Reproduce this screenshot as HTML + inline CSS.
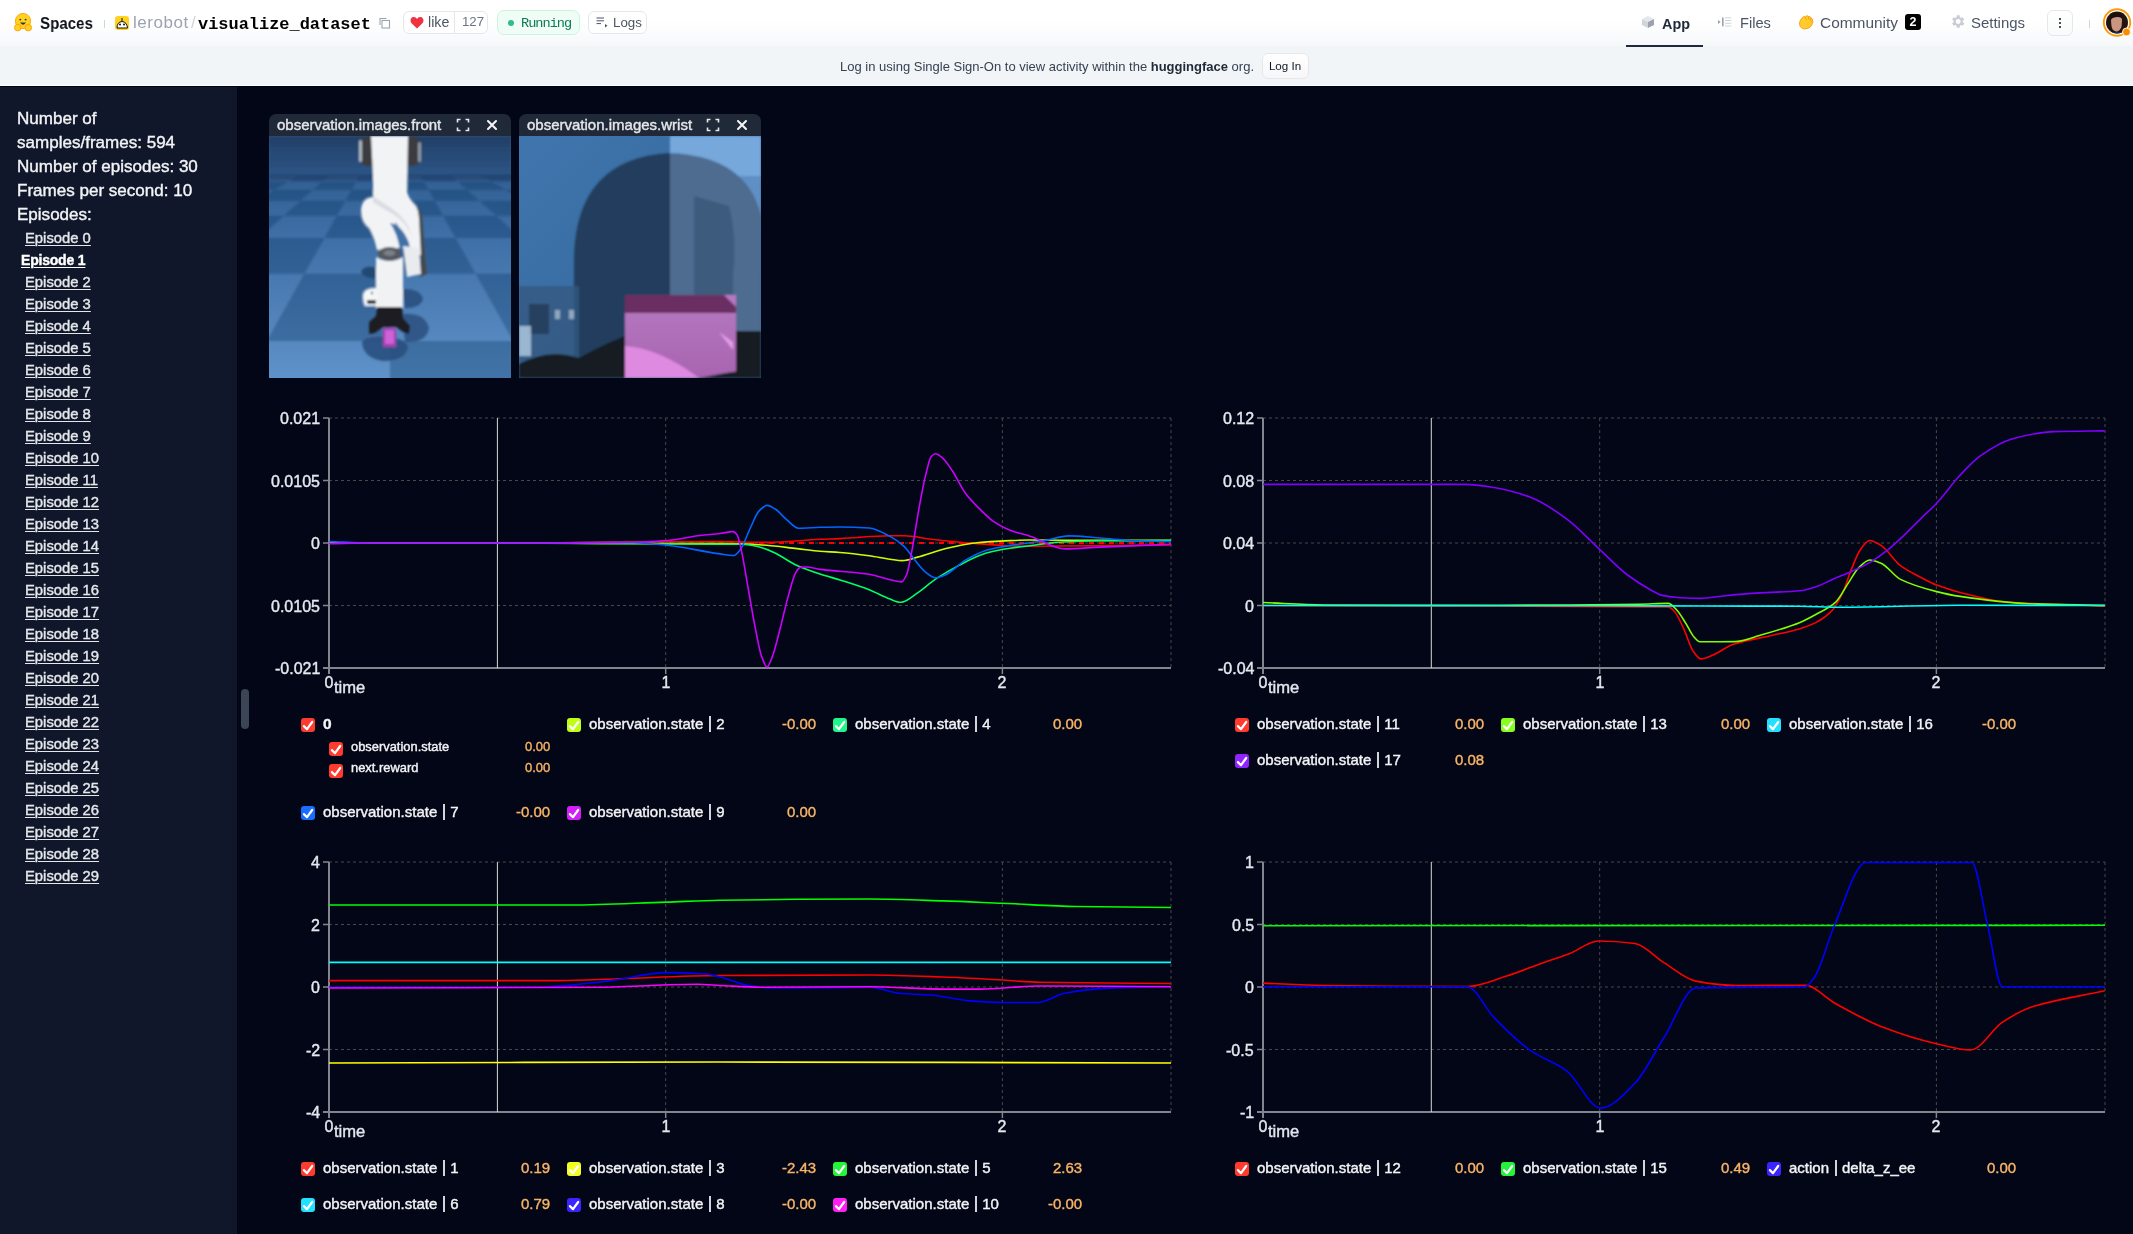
<!DOCTYPE html>
<html><head><meta charset="utf-8"><title>visualize_dataset</title>
<style>
html,body{margin:0;padding:0;}
.dk div{-webkit-text-stroke:0.4px currentColor;}
div{will-change:transform;}
body{width:2133px;height:1234px;overflow:hidden;position:relative;background:#020617;font-family:"Liberation Sans", sans-serif;}
</style></head><body>
<div style="position:absolute;left:0px;top:0px;width:2133px;height:46px;background:linear-gradient(to bottom,#ffffff 0%,#ffffff 45%,#f6f8fa 100%);"></div>
<div style="position:absolute;left:0px;top:46px;width:2133px;height:39px;background:#f2f5f8;"></div>
<div style="position:absolute;left:0px;top:85px;width:2133px;height:1px;background:#ffffff;"></div>
<svg style="position:absolute;left:13px;top:12px" width="21" height="21" viewBox="0 0 21 21">
<circle cx="10" cy="9" r="7.6" fill="#FFD21E" stroke="#FF9D0B" stroke-width="0.9"/>
<circle cx="7.3" cy="7.6" r="0.95" fill="#32343D"/><circle cx="12.6" cy="7.6" r="0.95" fill="#32343D"/>
<path d="M7 10.4 Q10 14.6 13 10.4 Z" fill="#32343D"/><path d="M8.4 12.3 Q10 13.6 11.6 12.3 Q10 11.6 8.4 12.3Z" fill="#FF323D"/>
<ellipse cx="4.8" cy="15.6" rx="3.3" ry="3.3" fill="#FFD21E" stroke="#FF9D0B" stroke-width="0.9"/>
<ellipse cx="15.3" cy="15.6" rx="3.3" ry="3.3" fill="#FFD21E" stroke="#FF9D0B" stroke-width="0.9"/>
</svg>
<div style="position:absolute;top:12.58px;font-size:16.8px;line-height:21.0px;color:#0b0f19;font-weight:700;font-family:'Liberation Sans', sans-serif;white-space:nowrap;left:39.50px;transform:scaleX(0.9);transform-origin:0 0;">Spaces</div>
<div style="position:absolute;left:104px;top:20px;width:1px;height:8px;background:#d1d5db;"></div>
<svg style="position:absolute;left:115px;top:16px" width="14" height="14" viewBox="0 0 14 14">
<rect x="0" y="0" width="14" height="14" rx="3" fill="#FFD21E"/>
<path d="M2 12 Q2 6 7 5.5 Q12 6 12.5 12 Z" fill="#fff" stroke="#111" stroke-width="1"/>
<circle cx="5" cy="8.5" r="1" fill="#111"/><circle cx="9" cy="8.5" r="1" fill="#111"/>
<rect x="6.5" y="2" width="1" height="3" fill="#111"/>
</svg>
<div style="position:absolute;top:12.48px;font-size:17px;line-height:21.25px;color:#9ca3af;font-weight:400;font-family:'Liberation Sans', sans-serif;white-space:nowrap;letter-spacing:0.55px;left:133.00px;">lerobot</div>
<div style="position:absolute;top:12.48px;font-size:17px;line-height:21.25px;color:#d1d5db;font-weight:400;font-family:'Liberation Sans', sans-serif;white-space:nowrap;left:190.50px;">/</div>
<div style="position:absolute;top:13.69px;font-size:16.95px;line-height:21.19px;color:#000000;font-weight:700;font-family:'Liberation Mono', monospace;white-space:nowrap;left:197.60px;">visualize_dataset</div>
<svg style="position:absolute;left:379px;top:17px" width="12" height="12" viewBox="0 0 12 12" fill="none" stroke="#9ca3af" stroke-width="1.1">
<path d="M1 8 V1.5 H7.5"/><rect x="3" y="3.5" width="7.5" height="7.5" fill="#fff"/></svg>
<div style="position:absolute;left:403px;top:11px;width:85px;height:23px;background:#fff;box-sizing:border-box;border:1px solid #e5e7eb;border-radius:6px;"></div>
<div style="position:absolute;left:454px;top:12px;width:1px;height:21px;background:#e5e7eb;"></div>
<svg style="position:absolute;left:410px;top:16px" width="14" height="13" viewBox="0 0 14 13">
<path d="M7 12.5 L1.6 7.3 C-0.3 5.4 0.3 1.2 3.6 1 C5.2 0.9 6.3 1.9 7 2.9 C7.7 1.9 8.8 0.9 10.4 1 C13.7 1.2 14.3 5.4 12.4 7.3 Z" fill="#ef3340"/></svg>
<div style="position:absolute;top:13.50px;font-size:14.2px;line-height:17.75px;color:#4b5563;font-weight:400;font-family:'Liberation Sans', sans-serif;white-space:nowrap;left:427.70px;">like</div>
<div style="position:absolute;top:14.48px;font-size:13.2px;line-height:16.5px;color:#6b7280;font-weight:400;font-family:'Liberation Sans', sans-serif;white-space:nowrap;left:461.50px;">127</div>
<div style="position:absolute;left:497px;top:10px;width:83px;height:25px;background:#effdf6;box-sizing:border-box;border:1px solid #c9f5de;border-radius:7px;"></div>
<div style="position:absolute;left:507.5px;top:19.5px;width:6px;height:6px;border-radius:50%;background:#2fbf86"></div>
<div style="position:absolute;top:14.88px;font-size:13.6px;line-height:17.0px;color:#0b7a55;font-weight:400;font-family:'Liberation Mono', monospace;white-space:nowrap;letter-spacing:-1.0px;left:520.50px;">Running</div>
<div style="position:absolute;left:588px;top:11px;width:59px;height:23px;background:#fff;box-sizing:border-box;border:1px solid #e5e7eb;border-radius:6px;"></div>
<svg style="position:absolute;left:596px;top:17px" width="12" height="11" viewBox="0 0 12 11" fill="none" stroke="#4b5563" stroke-width="1">
<path d="M0.5 1 H8 M0.5 3.8 H8 M0.5 6.6 H5"/><path d="M9 7 L11.5 8.8 L9 10.5 Z" fill="#4b5563" stroke="none"/></svg>
<div style="position:absolute;top:14.68px;font-size:13.3px;line-height:16.62px;color:#4b5563;font-weight:400;font-family:'Liberation Sans', sans-serif;white-space:nowrap;left:613.00px;">Logs</div>
<svg style="position:absolute;left:1641px;top:15px" width="14" height="14" viewBox="0 0 14 14">
<path d="M7 1 L13 4 L7 7 L1 4 Z" fill="#e5e7eb"/><path d="M1 4 L7 7 L7 13 L1 10 Z" fill="#d1d5db"/><path d="M13 4 L7 7 L7 13 L13 10 Z" fill="#9ca3af"/></svg>
<div style="position:absolute;top:14.81px;font-size:14.4px;line-height:18.0px;color:#1f2937;font-weight:700;font-family:'Liberation Sans', sans-serif;white-space:nowrap;left:1662.00px;">App</div>
<div style="position:absolute;left:1626px;top:45px;width:77px;height:2px;background:#1f2937;"></div>
<svg style="position:absolute;left:1717px;top:16px" width="16" height="12" viewBox="0 0 16 12">
<path d="M1 3.9 L3.7 6 L1 8.1 Z" fill="#9ca3af"/><rect x="5" y="1.5" width="1.6" height="8.8" fill="#9ca3af"/>
<rect x="8" y="1.3" width="6.3" height="1" fill="#d1d5db"/><rect x="8" y="4" width="6.3" height="1" fill="#d1d5db"/><rect x="8" y="6.8" width="6.3" height="1" fill="#d1d5db"/><rect x="8" y="9.5" width="6.3" height="1" fill="#d1d5db"/></svg>
<div style="position:absolute;top:13.82px;font-size:14.6px;line-height:18.25px;color:#4b5563;font-weight:400;font-family:'Liberation Sans', sans-serif;white-space:nowrap;left:1739.50px;">Files</div>
<svg style="position:absolute;left:1798px;top:14px" width="16" height="16" viewBox="0 0 16 16">
<path d="M1.6 10.5 C1.2 7.5 3 4.8 4.8 3.3 C5.6 2.2 6.8 2.4 7.2 3.2 C8 1.6 9.6 1.4 10.4 2.6 C11.4 2.2 12.8 2.8 12.9 4 C14.2 4.2 14.9 5.6 14.3 6.8 C15.2 7.6 15 9 14.2 9.8 C13.8 12.4 11 14.6 7.4 14.8 C4 15 2 13 1.6 10.5 Z" fill="#FFCC2E" stroke="#FF9D0B" stroke-width="1"/>
<path d="M7.2 3.2 L8.6 6.4 M10.4 2.6 L11 5.6 M12.9 4 L12.6 6.8 M14.3 6.8 L12.8 8.6" stroke="#F29A0D" stroke-width="0.8" fill="none"/></svg>
<div style="position:absolute;top:12.99px;font-size:15.45px;line-height:19.31px;color:#4b5563;font-weight:400;font-family:'Liberation Sans', sans-serif;white-space:nowrap;left:1820.00px;">Community</div>
<div style="position:absolute;left:1905px;top:14px;width:16px;height:16px;background:#000;border-radius:3px;"></div>
<div style="position:absolute;top:14.86px;font-size:12.5px;line-height:15.62px;color:#fff;font-weight:700;font-family:'Liberation Sans', sans-serif;white-space:nowrap;left:1613.00px;width:600px;text-align:center;">2</div>
<svg style="position:absolute;left:1948.5px;top:13px" width="17" height="17" viewBox="0 0 24 24">
<path fill="#c9cdd3" d="M19.4 13a7.5 7.5 0 0 0 0-2l2.1-1.6-2-3.5-2.5 1a7.6 7.6 0 0 0-1.7-1L15 3.2h-4l-.4 2.7a7.6 7.6 0 0 0-1.7 1l-2.5-1-2 3.5L6.5 11a7.5 7.5 0 0 0 0 2l-2.1 1.6 2 3.5 2.5-1a7.6 7.6 0 0 0 1.7 1l.4 2.7h4l.4-2.7a7.6 7.6 0 0 0 1.7-1l2.5 1 2-3.5zM13 15.5a3.5 3.5 0 1 1 0-7 3.5 3.5 0 0 1 0 7z"/></svg>
<div style="position:absolute;top:14.37px;font-size:14.95px;line-height:18.69px;color:#4b5563;font-weight:400;font-family:'Liberation Sans', sans-serif;white-space:nowrap;left:1970.50px;">Settings</div>
<div style="position:absolute;left:2047px;top:10px;width:26px;height:26px;background:#fff;box-sizing:border-box;border:1px solid #e5e7eb;border-radius:6px;background:linear-gradient(#fff,#f9fafb);"></div>
<div style="position:absolute;left:2059px;top:18px;width:2px;height:2px;background:#111;border-radius:1px"></div>
<div style="position:absolute;left:2059px;top:22px;width:2px;height:2px;background:#111;border-radius:1px"></div>
<div style="position:absolute;left:2059px;top:26px;width:2px;height:2px;background:#111;border-radius:1px"></div>
<div style="position:absolute;left:2089px;top:20px;width:1px;height:8px;background:#d1d5db;"></div>
<svg style="position:absolute;left:2102px;top:7px" width="31" height="31" viewBox="0 0 31 31">
<circle cx="15" cy="15.5" r="13.2" fill="#fff" stroke="#fb9b0b" stroke-width="1.9"/>
<clipPath id="avc"><circle cx="15" cy="15.5" r="11"/></clipPath>
<g clip-path="url(#avc)"><rect x="0" y="0" width="31" height="31" fill="#24140f"/>
<path d="M9 14 Q9 7 15 7.5 Q20.5 8 20 14 L19.5 20 Q17 25 14 24.5 Q10 23.5 9.5 19Z" fill="#c99682"/>
<path d="M8 13 Q8 5 15 5.5 Q22 6 21 13 Q19 9.5 15 10 Q11 10 8 13Z" fill="#1a0f0b"/>
<path d="M4 31 Q8 24 15 25 Q22 24 26 31Z" fill="#1d3050"/></g>
<circle cx="24.5" cy="25" r="4" fill="#fb8c00" stroke="#fff" stroke-width="0.9"/></svg>
<div style="position:absolute;left:840px;top:58.50px;font-size:13px;line-height:16px;color:#374151;white-space:nowrap;font-family:'Liberation Sans', sans-serif">Log in using Single Sign-On to view activity within the <b style="color:#1f2937">huggingface</b> org.</div>
<div style="position:absolute;left:1262px;top:53px;width:47px;height:26px;background:#fff;box-sizing:border-box;border:1px solid #e5e7eb;border-radius:6px;background:linear-gradient(#fff,#f7f7f9);"></div>
<div style="position:absolute;top:59.13px;font-size:11.6px;line-height:14.5px;color:#111827;font-weight:400;font-family:'Liberation Sans', sans-serif;white-space:nowrap;left:985.30px;width:600px;text-align:center;">Log In</div>
<div class="dk">
<div style="position:absolute;left:0px;top:86px;width:237px;height:1148px;background:#10172a;"></div>
<div style="position:absolute;left:0px;top:86px;width:2133px;height:1px;background:#00030f;"></div>
<div style="position:absolute;top:107.84px;font-size:17.05px;line-height:21.31px;color:#f3f4f6;font-weight:400;font-family:'Liberation Sans', sans-serif;white-space:nowrap;left:17.00px;">Number of</div>
<div style="position:absolute;top:131.84px;font-size:17.05px;line-height:21.31px;color:#f3f4f6;font-weight:400;font-family:'Liberation Sans', sans-serif;white-space:nowrap;left:17.00px;">samples/frames: 594</div>
<div style="position:absolute;top:155.84px;font-size:17.05px;line-height:21.31px;color:#f3f4f6;font-weight:400;font-family:'Liberation Sans', sans-serif;white-space:nowrap;left:17.00px;">Number of episodes: 30</div>
<div style="position:absolute;top:179.84px;font-size:17.05px;line-height:21.31px;color:#f3f4f6;font-weight:400;font-family:'Liberation Sans', sans-serif;white-space:nowrap;left:17.00px;">Frames per second: 10</div>
<div style="position:absolute;top:203.84px;font-size:17.05px;line-height:21.31px;color:#f3f4f6;font-weight:400;font-family:'Liberation Sans', sans-serif;white-space:nowrap;left:17.00px;">Episodes:</div>
<div style="position:absolute;top:229.12px;font-size:14.8px;line-height:18.5px;color:#e5e7eb;font-weight:400;font-family:'Liberation Sans', sans-serif;white-space:nowrap;left:25.00px;text-decoration:underline;text-underline-offset:2px;text-decoration-thickness:1px;">Episode 0</div>
<div style="position:absolute;top:251.90px;font-size:14.0px;line-height:17.5px;color:#ffffff;font-weight:700;font-family:'Liberation Sans', sans-serif;white-space:nowrap;letter-spacing:-0.2px;left:21.00px;text-decoration:underline;text-underline-offset:2px;text-decoration-thickness:1px;">Episode 1</div>
<div style="position:absolute;top:273.12px;font-size:14.8px;line-height:18.5px;color:#e5e7eb;font-weight:400;font-family:'Liberation Sans', sans-serif;white-space:nowrap;left:25.00px;text-decoration:underline;text-underline-offset:2px;text-decoration-thickness:1px;">Episode 2</div>
<div style="position:absolute;top:295.12px;font-size:14.8px;line-height:18.5px;color:#e5e7eb;font-weight:400;font-family:'Liberation Sans', sans-serif;white-space:nowrap;left:25.00px;text-decoration:underline;text-underline-offset:2px;text-decoration-thickness:1px;">Episode 3</div>
<div style="position:absolute;top:317.12px;font-size:14.8px;line-height:18.5px;color:#e5e7eb;font-weight:400;font-family:'Liberation Sans', sans-serif;white-space:nowrap;left:25.00px;text-decoration:underline;text-underline-offset:2px;text-decoration-thickness:1px;">Episode 4</div>
<div style="position:absolute;top:339.12px;font-size:14.8px;line-height:18.5px;color:#e5e7eb;font-weight:400;font-family:'Liberation Sans', sans-serif;white-space:nowrap;left:25.00px;text-decoration:underline;text-underline-offset:2px;text-decoration-thickness:1px;">Episode 5</div>
<div style="position:absolute;top:361.12px;font-size:14.8px;line-height:18.5px;color:#e5e7eb;font-weight:400;font-family:'Liberation Sans', sans-serif;white-space:nowrap;left:25.00px;text-decoration:underline;text-underline-offset:2px;text-decoration-thickness:1px;">Episode 6</div>
<div style="position:absolute;top:383.12px;font-size:14.8px;line-height:18.5px;color:#e5e7eb;font-weight:400;font-family:'Liberation Sans', sans-serif;white-space:nowrap;left:25.00px;text-decoration:underline;text-underline-offset:2px;text-decoration-thickness:1px;">Episode 7</div>
<div style="position:absolute;top:405.12px;font-size:14.8px;line-height:18.5px;color:#e5e7eb;font-weight:400;font-family:'Liberation Sans', sans-serif;white-space:nowrap;left:25.00px;text-decoration:underline;text-underline-offset:2px;text-decoration-thickness:1px;">Episode 8</div>
<div style="position:absolute;top:427.12px;font-size:14.8px;line-height:18.5px;color:#e5e7eb;font-weight:400;font-family:'Liberation Sans', sans-serif;white-space:nowrap;left:25.00px;text-decoration:underline;text-underline-offset:2px;text-decoration-thickness:1px;">Episode 9</div>
<div style="position:absolute;top:449.12px;font-size:14.8px;line-height:18.5px;color:#e5e7eb;font-weight:400;font-family:'Liberation Sans', sans-serif;white-space:nowrap;left:25.00px;text-decoration:underline;text-underline-offset:2px;text-decoration-thickness:1px;">Episode 10</div>
<div style="position:absolute;top:471.12px;font-size:14.8px;line-height:18.5px;color:#e5e7eb;font-weight:400;font-family:'Liberation Sans', sans-serif;white-space:nowrap;left:25.00px;text-decoration:underline;text-underline-offset:2px;text-decoration-thickness:1px;">Episode 11</div>
<div style="position:absolute;top:493.12px;font-size:14.8px;line-height:18.5px;color:#e5e7eb;font-weight:400;font-family:'Liberation Sans', sans-serif;white-space:nowrap;left:25.00px;text-decoration:underline;text-underline-offset:2px;text-decoration-thickness:1px;">Episode 12</div>
<div style="position:absolute;top:515.12px;font-size:14.8px;line-height:18.5px;color:#e5e7eb;font-weight:400;font-family:'Liberation Sans', sans-serif;white-space:nowrap;left:25.00px;text-decoration:underline;text-underline-offset:2px;text-decoration-thickness:1px;">Episode 13</div>
<div style="position:absolute;top:537.12px;font-size:14.8px;line-height:18.5px;color:#e5e7eb;font-weight:400;font-family:'Liberation Sans', sans-serif;white-space:nowrap;left:25.00px;text-decoration:underline;text-underline-offset:2px;text-decoration-thickness:1px;">Episode 14</div>
<div style="position:absolute;top:559.12px;font-size:14.8px;line-height:18.5px;color:#e5e7eb;font-weight:400;font-family:'Liberation Sans', sans-serif;white-space:nowrap;left:25.00px;text-decoration:underline;text-underline-offset:2px;text-decoration-thickness:1px;">Episode 15</div>
<div style="position:absolute;top:581.12px;font-size:14.8px;line-height:18.5px;color:#e5e7eb;font-weight:400;font-family:'Liberation Sans', sans-serif;white-space:nowrap;left:25.00px;text-decoration:underline;text-underline-offset:2px;text-decoration-thickness:1px;">Episode 16</div>
<div style="position:absolute;top:603.12px;font-size:14.8px;line-height:18.5px;color:#e5e7eb;font-weight:400;font-family:'Liberation Sans', sans-serif;white-space:nowrap;left:25.00px;text-decoration:underline;text-underline-offset:2px;text-decoration-thickness:1px;">Episode 17</div>
<div style="position:absolute;top:625.12px;font-size:14.8px;line-height:18.5px;color:#e5e7eb;font-weight:400;font-family:'Liberation Sans', sans-serif;white-space:nowrap;left:25.00px;text-decoration:underline;text-underline-offset:2px;text-decoration-thickness:1px;">Episode 18</div>
<div style="position:absolute;top:647.12px;font-size:14.8px;line-height:18.5px;color:#e5e7eb;font-weight:400;font-family:'Liberation Sans', sans-serif;white-space:nowrap;left:25.00px;text-decoration:underline;text-underline-offset:2px;text-decoration-thickness:1px;">Episode 19</div>
<div style="position:absolute;top:669.12px;font-size:14.8px;line-height:18.5px;color:#e5e7eb;font-weight:400;font-family:'Liberation Sans', sans-serif;white-space:nowrap;left:25.00px;text-decoration:underline;text-underline-offset:2px;text-decoration-thickness:1px;">Episode 20</div>
<div style="position:absolute;top:691.12px;font-size:14.8px;line-height:18.5px;color:#e5e7eb;font-weight:400;font-family:'Liberation Sans', sans-serif;white-space:nowrap;left:25.00px;text-decoration:underline;text-underline-offset:2px;text-decoration-thickness:1px;">Episode 21</div>
<div style="position:absolute;top:713.12px;font-size:14.8px;line-height:18.5px;color:#e5e7eb;font-weight:400;font-family:'Liberation Sans', sans-serif;white-space:nowrap;left:25.00px;text-decoration:underline;text-underline-offset:2px;text-decoration-thickness:1px;">Episode 22</div>
<div style="position:absolute;top:735.12px;font-size:14.8px;line-height:18.5px;color:#e5e7eb;font-weight:400;font-family:'Liberation Sans', sans-serif;white-space:nowrap;left:25.00px;text-decoration:underline;text-underline-offset:2px;text-decoration-thickness:1px;">Episode 23</div>
<div style="position:absolute;top:757.12px;font-size:14.8px;line-height:18.5px;color:#e5e7eb;font-weight:400;font-family:'Liberation Sans', sans-serif;white-space:nowrap;left:25.00px;text-decoration:underline;text-underline-offset:2px;text-decoration-thickness:1px;">Episode 24</div>
<div style="position:absolute;top:779.12px;font-size:14.8px;line-height:18.5px;color:#e5e7eb;font-weight:400;font-family:'Liberation Sans', sans-serif;white-space:nowrap;left:25.00px;text-decoration:underline;text-underline-offset:2px;text-decoration-thickness:1px;">Episode 25</div>
<div style="position:absolute;top:801.12px;font-size:14.8px;line-height:18.5px;color:#e5e7eb;font-weight:400;font-family:'Liberation Sans', sans-serif;white-space:nowrap;left:25.00px;text-decoration:underline;text-underline-offset:2px;text-decoration-thickness:1px;">Episode 26</div>
<div style="position:absolute;top:823.12px;font-size:14.8px;line-height:18.5px;color:#e5e7eb;font-weight:400;font-family:'Liberation Sans', sans-serif;white-space:nowrap;left:25.00px;text-decoration:underline;text-underline-offset:2px;text-decoration-thickness:1px;">Episode 27</div>
<div style="position:absolute;top:845.12px;font-size:14.8px;line-height:18.5px;color:#e5e7eb;font-weight:400;font-family:'Liberation Sans', sans-serif;white-space:nowrap;left:25.00px;text-decoration:underline;text-underline-offset:2px;text-decoration-thickness:1px;">Episode 28</div>
<div style="position:absolute;top:867.12px;font-size:14.8px;line-height:18.5px;color:#e5e7eb;font-weight:400;font-family:'Liberation Sans', sans-serif;white-space:nowrap;left:25.00px;text-decoration:underline;text-underline-offset:2px;text-decoration-thickness:1px;">Episode 29</div>
<div style="position:absolute;left:241px;top:689px;width:8px;height:40px;background:#3b4556;border-radius:4px;"></div>
<svg style="position:absolute;left:0;top:0" width="2133" height="1234" viewBox="0 0 2133 1234">
<line x1="329" y1="418.0" x2="1171" y2="418.0" stroke="#474849" stroke-width="1" stroke-dasharray="3 3"/>
<line x1="329" y1="480.5" x2="1171" y2="480.5" stroke="#474849" stroke-width="1" stroke-dasharray="3 3"/>
<line x1="329" y1="543.0" x2="1171" y2="543.0" stroke="#474849" stroke-width="1" stroke-dasharray="3 3"/>
<line x1="329" y1="605.5" x2="1171" y2="605.5" stroke="#474849" stroke-width="1" stroke-dasharray="3 3"/>
<line x1="329" y1="668.0" x2="1171" y2="668.0" stroke="#474849" stroke-width="1" stroke-dasharray="3 3"/>
<line x1="665.7" y1="418" x2="665.7" y2="668" stroke="#474849" stroke-width="1" stroke-dasharray="3 3"/>
<line x1="1002.4" y1="418" x2="1002.4" y2="668" stroke="#474849" stroke-width="1" stroke-dasharray="3 3"/>
<line x1="1171" y1="418" x2="1171" y2="668" stroke="#474849" stroke-width="1" stroke-dasharray="3 3"/>
<line x1="1263" y1="418.0" x2="2105" y2="418.0" stroke="#474849" stroke-width="1" stroke-dasharray="3 3"/>
<line x1="1263" y1="480.5" x2="2105" y2="480.5" stroke="#474849" stroke-width="1" stroke-dasharray="3 3"/>
<line x1="1263" y1="543.0" x2="2105" y2="543.0" stroke="#474849" stroke-width="1" stroke-dasharray="3 3"/>
<line x1="1263" y1="605.5" x2="2105" y2="605.5" stroke="#474849" stroke-width="1" stroke-dasharray="3 3"/>
<line x1="1263" y1="668.0" x2="2105" y2="668.0" stroke="#474849" stroke-width="1" stroke-dasharray="3 3"/>
<line x1="1599.7" y1="418" x2="1599.7" y2="668" stroke="#474849" stroke-width="1" stroke-dasharray="3 3"/>
<line x1="1936.4" y1="418" x2="1936.4" y2="668" stroke="#474849" stroke-width="1" stroke-dasharray="3 3"/>
<line x1="2105" y1="418" x2="2105" y2="668" stroke="#474849" stroke-width="1" stroke-dasharray="3 3"/>
<line x1="329" y1="862.0" x2="1171" y2="862.0" stroke="#474849" stroke-width="1" stroke-dasharray="3 3"/>
<line x1="329" y1="924.5" x2="1171" y2="924.5" stroke="#474849" stroke-width="1" stroke-dasharray="3 3"/>
<line x1="329" y1="987.0" x2="1171" y2="987.0" stroke="#474849" stroke-width="1" stroke-dasharray="3 3"/>
<line x1="329" y1="1049.5" x2="1171" y2="1049.5" stroke="#474849" stroke-width="1" stroke-dasharray="3 3"/>
<line x1="329" y1="1112.0" x2="1171" y2="1112.0" stroke="#474849" stroke-width="1" stroke-dasharray="3 3"/>
<line x1="665.7" y1="862" x2="665.7" y2="1112" stroke="#474849" stroke-width="1" stroke-dasharray="3 3"/>
<line x1="1002.4" y1="862" x2="1002.4" y2="1112" stroke="#474849" stroke-width="1" stroke-dasharray="3 3"/>
<line x1="1171" y1="862" x2="1171" y2="1112" stroke="#474849" stroke-width="1" stroke-dasharray="3 3"/>
<line x1="1263" y1="862.0" x2="2105" y2="862.0" stroke="#474849" stroke-width="1" stroke-dasharray="3 3"/>
<line x1="1263" y1="924.5" x2="2105" y2="924.5" stroke="#474849" stroke-width="1" stroke-dasharray="3 3"/>
<line x1="1263" y1="987.0" x2="2105" y2="987.0" stroke="#474849" stroke-width="1" stroke-dasharray="3 3"/>
<line x1="1263" y1="1049.5" x2="2105" y2="1049.5" stroke="#474849" stroke-width="1" stroke-dasharray="3 3"/>
<line x1="1263" y1="1112.0" x2="2105" y2="1112.0" stroke="#474849" stroke-width="1" stroke-dasharray="3 3"/>
<line x1="1599.7" y1="862" x2="1599.7" y2="1112" stroke="#474849" stroke-width="1" stroke-dasharray="3 3"/>
<line x1="1936.4" y1="862" x2="1936.4" y2="1112" stroke="#474849" stroke-width="1" stroke-dasharray="3 3"/>
<line x1="2105" y1="862" x2="2105" y2="1112" stroke="#474849" stroke-width="1" stroke-dasharray="3 3"/>
<line x1="329" y1="418" x2="329" y2="674" stroke="#80868f" stroke-width="2"/>
<line x1="323" y1="668" x2="1171" y2="668" stroke="#80868f" stroke-width="2"/>
<line x1="323" y1="418.0" x2="329" y2="418.0" stroke="#80868f" stroke-width="1.5"/>
<line x1="323" y1="480.5" x2="329" y2="480.5" stroke="#80868f" stroke-width="1.5"/>
<line x1="323" y1="543.0" x2="329" y2="543.0" stroke="#80868f" stroke-width="1.5"/>
<line x1="323" y1="605.5" x2="329" y2="605.5" stroke="#80868f" stroke-width="1.5"/>
<line x1="665.7" y1="668" x2="665.7" y2="674" stroke="#80868f" stroke-width="1.5"/>
<line x1="1002.4" y1="668" x2="1002.4" y2="674" stroke="#80868f" stroke-width="1.5"/>
<line x1="497.4" y1="418" x2="497.4" y2="668" stroke="#d9d9d9" stroke-width="1"/>
<line x1="1263" y1="418" x2="1263" y2="674" stroke="#80868f" stroke-width="2"/>
<line x1="1257" y1="668" x2="2105" y2="668" stroke="#80868f" stroke-width="2"/>
<line x1="1257" y1="418.0" x2="1263" y2="418.0" stroke="#80868f" stroke-width="1.5"/>
<line x1="1257" y1="480.5" x2="1263" y2="480.5" stroke="#80868f" stroke-width="1.5"/>
<line x1="1257" y1="543.0" x2="1263" y2="543.0" stroke="#80868f" stroke-width="1.5"/>
<line x1="1257" y1="605.5" x2="1263" y2="605.5" stroke="#80868f" stroke-width="1.5"/>
<line x1="1599.7" y1="668" x2="1599.7" y2="674" stroke="#80868f" stroke-width="1.5"/>
<line x1="1936.4" y1="668" x2="1936.4" y2="674" stroke="#80868f" stroke-width="1.5"/>
<line x1="1431.3" y1="418" x2="1431.3" y2="668" stroke="#d9d9d9" stroke-width="1"/>
<line x1="329" y1="862" x2="329" y2="1118" stroke="#80868f" stroke-width="2"/>
<line x1="323" y1="1112" x2="1171" y2="1112" stroke="#80868f" stroke-width="2"/>
<line x1="323" y1="862.0" x2="329" y2="862.0" stroke="#80868f" stroke-width="1.5"/>
<line x1="323" y1="924.5" x2="329" y2="924.5" stroke="#80868f" stroke-width="1.5"/>
<line x1="323" y1="987.0" x2="329" y2="987.0" stroke="#80868f" stroke-width="1.5"/>
<line x1="323" y1="1049.5" x2="329" y2="1049.5" stroke="#80868f" stroke-width="1.5"/>
<line x1="665.7" y1="1112" x2="665.7" y2="1118" stroke="#80868f" stroke-width="1.5"/>
<line x1="1002.4" y1="1112" x2="1002.4" y2="1118" stroke="#80868f" stroke-width="1.5"/>
<line x1="497.4" y1="862" x2="497.4" y2="1112" stroke="#d9d9d9" stroke-width="1"/>
<line x1="1263" y1="862" x2="1263" y2="1118" stroke="#80868f" stroke-width="2"/>
<line x1="1257" y1="1112" x2="2105" y2="1112" stroke="#80868f" stroke-width="2"/>
<line x1="1257" y1="862.0" x2="1263" y2="862.0" stroke="#80868f" stroke-width="1.5"/>
<line x1="1257" y1="924.5" x2="1263" y2="924.5" stroke="#80868f" stroke-width="1.5"/>
<line x1="1257" y1="987.0" x2="1263" y2="987.0" stroke="#80868f" stroke-width="1.5"/>
<line x1="1257" y1="1049.5" x2="1263" y2="1049.5" stroke="#80868f" stroke-width="1.5"/>
<line x1="1599.7" y1="1112" x2="1599.7" y2="1118" stroke="#80868f" stroke-width="1.5"/>
<line x1="1936.4" y1="1112" x2="1936.4" y2="1118" stroke="#80868f" stroke-width="1.5"/>
<line x1="1431.3" y1="862" x2="1431.3" y2="1112" stroke="#d9d9d9" stroke-width="1"/>
<path d="M329.0,543.0 C399.3,543.0 469.7,543.0 540.0,543.0 C560.0,543.0 580.0,542.1 600.0,542.0 C640.0,541.8 680.0,541.6 720.0,541.6 C735.3,541.6 750.7,542.4 766.0,542.4 C784.0,542.4 802.0,540.1 820.0,539.3 C826.7,539.0 833.3,538.9 840.0,538.6 C856.7,537.9 873.3,535.8 890.0,535.8 C894.6,535.8 899.2,535.8 903.8,535.8 C913.0,535.8 922.1,538.2 931.3,539.2 C945.1,540.7 958.9,542.2 972.7,543.3 C985.1,544.3 997.6,545.4 1010.0,545.8 C1016.7,546.0 1023.3,546.3 1030.0,546.3 C1077.0,546.3 1124.0,545.4 1171.0,545.0" fill="none" stroke="#ff0000" stroke-width="1.6" stroke-linejoin="round"/>
<path d="M329.0,543.0 L1171.0,543.0" fill="none" stroke="#ff0000" stroke-width="2" stroke-linejoin="round" stroke-dasharray="5 5"/>
<path d="M329.0,543.0 C399.3,543.0 469.7,543.0 540.0,543.0 C560.0,543.0 580.0,543.5 600.0,543.5 C640.0,543.6 680.0,543.5 720.0,543.6 C732.8,543.6 745.7,544.1 758.5,544.7 C771.3,545.3 784.2,547.2 797.0,548.6 C804.7,549.4 812.3,550.6 820.0,551.2 C826.7,551.7 833.3,552.0 840.0,552.5 C849.7,553.3 859.5,554.5 869.2,555.8 C876.1,556.7 883.1,558.3 890.0,559.2 C894.1,559.7 898.3,560.6 902.4,560.6 C907.5,560.6 912.5,558.4 917.6,557.1 C926.8,554.7 935.9,551.0 945.1,548.8 C954.3,546.6 963.5,544.3 972.7,543.3 C985.1,541.9 997.6,541.1 1010.0,540.6 C1016.7,540.3 1023.3,540.0 1030.0,540.0 C1053.3,540.0 1076.7,540.4 1100.0,540.4 C1123.7,540.4 1147.3,540.4 1171.0,540.4" fill="none" stroke="#ccff00" stroke-width="1.6" stroke-linejoin="round"/>
<path d="M329.0,543.2 C399.3,543.2 469.7,543.2 540.0,543.2 C573.3,543.2 606.7,543.6 640.0,543.8 C666.7,543.9 693.3,544.2 720.0,544.2 C727.2,544.2 734.4,544.2 741.6,544.2 C747.2,544.2 752.9,545.5 758.5,546.7 C763.6,547.8 768.8,550.1 773.9,552.4 C781.6,555.8 789.3,562.1 797.0,565.5 C804.7,568.9 812.3,571.5 820.0,574.0 C826.7,576.2 833.3,577.9 840.0,580.0 C849.7,583.1 859.5,586.0 869.2,589.8 C876.1,592.5 883.1,596.7 890.0,599.1 C893.7,600.4 897.3,602.3 901.0,602.3 C906.5,602.3 912.1,596.5 917.6,592.9 C923.6,589.0 929.5,583.2 935.5,579.2 C943.3,574.0 951.1,569.4 958.9,565.4 C968.1,560.7 977.2,555.5 986.4,553.0 C994.3,550.8 1002.1,549.4 1010.0,548.2 C1016.7,547.2 1023.3,546.5 1030.0,545.7 C1039.3,544.5 1048.7,542.7 1058.0,542.2 C1072.0,541.4 1086.0,540.9 1100.0,540.8 C1123.7,540.7 1147.3,540.7 1171.0,540.6" fill="none" stroke="#00ff66" stroke-width="1.6" stroke-linejoin="round"/>
<path d="M329.0,541.5 C343.3,542.0 357.7,543.0 372.0,543.0 C428.7,543.0 485.3,543.0 542.0,543.0 C568.0,543.0 594.0,542.2 620.0,542.2 C635.0,542.2 650.0,543.7 665.0,545.0 C683.3,546.6 701.7,551.5 720.0,553.9 C724.6,554.5 729.3,555.5 733.9,555.5 C735.9,555.5 738.0,552.6 740.0,550.1 C743.6,545.8 747.2,534.4 750.8,527.0 C753.4,521.7 755.9,514.4 758.5,511.6 C761.3,508.5 764.2,505.4 767.0,505.4 C769.8,505.4 772.7,507.6 775.5,509.3 C779.1,511.5 782.7,516.4 786.3,519.3 C790.4,522.6 794.5,528.2 798.6,528.2 C805.7,528.2 812.9,527.5 820.0,527.3 C826.7,527.2 833.3,527.0 840.0,527.0 C849.7,527.0 859.5,527.4 869.2,528.0 C876.1,528.5 883.1,532.8 890.0,536.4 C894.6,538.8 899.2,541.9 903.8,546.1 C907.5,549.4 911.1,555.5 914.8,559.9 C918.5,564.3 922.1,569.6 925.8,572.3 C929.0,574.7 932.3,577.8 935.5,577.8 C938.7,577.8 941.9,576.3 945.1,575.0 C952.0,572.3 958.9,563.8 965.8,559.9 C972.7,556.0 979.5,552.2 986.4,550.2 C994.3,547.9 1002.1,546.7 1010.0,545.4 C1021.3,543.5 1032.7,542.6 1044.0,540.8 C1052.2,539.5 1060.5,535.9 1068.7,535.9 C1079.2,535.9 1089.8,537.2 1100.3,538.0 C1112.0,538.8 1123.8,540.4 1135.5,540.8 C1147.3,541.2 1159.2,541.3 1171.0,541.6" fill="none" stroke="#0066ff" stroke-width="1.6" stroke-linejoin="round"/>
<path d="M329.0,543.6 C343.3,543.4 357.7,543.0 372.0,543.0 C428.7,543.0 485.3,543.0 542.0,543.0 C568.0,543.0 594.0,542.9 620.0,542.6 C636.0,542.4 652.0,541.6 668.0,540.5 C678.7,539.7 689.3,536.8 700.0,535.5 C706.7,534.7 713.3,534.3 720.0,533.5 C724.4,533.0 728.7,531.6 733.1,531.6 C734.4,531.6 735.7,533.0 737.0,534.7 C738.5,536.7 740.1,544.9 741.6,551.6 C743.6,560.5 745.7,574.1 747.7,585.5 C750.3,599.8 752.8,616.0 755.4,628.7 C757.5,638.9 759.5,650.9 761.6,656.4 C763.4,661.2 765.2,666.9 767.0,666.9 C768.8,666.9 770.6,660.9 772.4,656.4 C775.0,650.0 777.5,638.4 780.1,628.7 C782.7,619.0 785.2,607.0 787.8,597.9 C790.4,588.8 792.9,577.7 795.5,573.2 C797.0,570.5 798.6,567.6 800.1,567.4 C802.2,567.1 804.2,567.0 806.3,567.0 C810.9,567.0 815.4,568.8 820.0,569.4 C826.7,570.2 833.3,570.7 840.0,571.3 C849.7,572.2 859.5,572.8 869.2,574.2 C876.1,575.2 883.1,578.3 890.0,579.8 C893.9,580.6 897.8,581.9 901.7,581.9 C903.3,581.9 904.9,578.4 906.5,575.0 C908.3,571.0 910.2,559.6 912.0,550.2 C914.3,538.4 916.6,521.4 918.9,508.9 C921.2,496.4 923.5,483.4 925.8,474.4 C927.6,467.2 929.5,458.4 931.3,456.5 C932.7,455.0 934.1,453.8 935.5,453.8 C937.8,453.8 940.1,456.1 942.4,457.9 C945.6,460.5 948.8,465.6 952.0,470.3 C956.6,477.0 961.2,487.6 965.8,493.7 C970.4,499.8 975.0,504.3 979.6,508.9 C984.2,513.4 988.7,518.2 993.3,521.3 C998.9,525.1 1004.4,528.0 1010.0,530.2 C1016.7,532.8 1023.3,534.0 1030.0,536.2 C1041.7,540.0 1053.5,548.9 1065.2,548.9 C1076.9,548.9 1088.6,547.6 1100.3,547.1 C1123.9,546.0 1147.4,545.2 1171.0,544.3" fill="none" stroke="#cc00ff" stroke-width="1.6" stroke-linejoin="round"/>
<path d="M1263.0,605.5 C1342.0,605.7 1421.0,605.7 1500.0,606.0 C1550.0,606.2 1600.0,606.9 1650.0,606.9 C1656.1,606.9 1662.1,606.9 1668.2,606.9 C1670.2,606.9 1672.3,609.2 1674.3,611.2 C1677.5,614.4 1680.8,622.5 1684.0,629.4 C1686.8,635.4 1689.7,646.0 1692.5,650.1 C1695.3,654.2 1698.2,658.9 1701.0,658.9 C1705.1,658.9 1709.1,656.5 1713.2,654.9 C1719.7,652.3 1726.2,646.8 1732.7,644.6 C1745.7,640.2 1758.6,638.5 1771.6,635.5 C1781.1,633.3 1790.5,631.7 1800.0,628.8 C1805.4,627.2 1810.8,625.2 1816.2,622.4 C1821.6,619.6 1827.0,616.0 1832.4,610.2 C1835.6,606.7 1838.9,600.6 1842.1,594.0 C1845.4,587.3 1848.6,575.9 1851.9,568.1 C1854.6,561.6 1857.3,554.0 1860.0,550.2 C1863.2,545.7 1866.5,540.5 1869.7,540.5 C1873.5,540.5 1877.2,543.2 1881.0,545.4 C1887.5,549.2 1894.0,560.8 1900.5,565.6 C1907.5,570.8 1914.6,574.1 1921.6,577.8 C1926.6,580.4 1931.7,583.2 1936.7,585.1 C1944.5,588.1 1952.2,590.4 1960.0,592.4 C1974.9,596.2 1989.7,600.6 2004.6,601.8 C2038.0,604.4 2071.4,604.7 2104.8,606.1" fill="none" stroke="#ff0000" stroke-width="1.6" stroke-linejoin="round"/>
<path d="M1263.0,602.5 C1283.2,603.3 1303.5,604.9 1323.7,605.0 C1382.5,605.2 1441.2,605.2 1500.0,605.2 C1546.7,605.2 1593.3,604.8 1640.0,604.2 C1649.4,604.1 1658.8,603.4 1668.2,603.4 C1671.0,603.4 1673.9,607.1 1676.7,610.0 C1680.0,613.3 1683.2,619.4 1686.5,624.5 C1688.9,628.3 1691.4,634.0 1693.8,636.7 C1695.8,638.9 1697.8,641.8 1699.8,641.8 C1711.6,641.8 1723.3,641.7 1735.1,641.6 C1743.2,641.5 1751.3,637.8 1759.4,635.5 C1772.9,631.7 1786.5,627.9 1800.0,622.4 C1805.4,620.2 1810.8,617.3 1816.2,614.3 C1822.7,610.7 1829.2,608.0 1835.7,602.1 C1840.0,598.2 1844.3,589.0 1848.6,582.6 C1851.9,577.7 1855.1,571.3 1858.4,568.1 C1862.2,564.4 1865.9,560.0 1869.7,560.0 C1873.5,560.0 1877.2,561.7 1881.0,563.2 C1887.5,565.8 1894.0,576.1 1900.5,579.4 C1912.6,585.4 1924.6,588.6 1936.7,591.6 C1944.5,593.6 1952.2,595.3 1960.0,596.4 C1983.0,599.8 2005.9,602.8 2028.9,603.7 C2054.2,604.6 2079.5,604.8 2104.8,605.4" fill="none" stroke="#80ff00" stroke-width="1.6" stroke-linejoin="round"/>
<path d="M1263.0,605.5 C1375.3,605.6 1487.7,605.7 1600.0,605.8 C1633.3,605.8 1666.7,605.9 1700.0,606.0 C1733.3,606.1 1766.7,606.1 1800.0,606.2 C1813.5,606.3 1827.0,607.3 1840.5,607.3 C1880.3,607.3 1920.2,605.3 1960.0,605.3 C2008.3,605.3 2056.5,605.4 2104.8,605.5" fill="none" stroke="#00ffff" stroke-width="1.6" stroke-linejoin="round"/>
<path d="M1263.0,484.4 C1330.2,484.4 1397.5,484.4 1464.7,484.4 C1474.5,484.4 1484.2,486.0 1494.0,487.5 C1506.1,489.3 1518.3,492.8 1530.4,497.3 C1542.6,501.8 1554.7,510.2 1566.9,519.1 C1577.4,526.8 1588.0,538.6 1598.5,548.3 C1608.2,557.2 1617.9,567.7 1627.6,575.0 C1635.1,580.6 1642.5,585.4 1650.0,589.5 C1654.1,591.7 1658.1,594.5 1662.2,595.4 C1668.3,596.7 1674.3,597.5 1680.4,597.8 C1687.3,598.1 1694.1,598.4 1701.0,598.4 C1708.3,598.4 1715.6,596.7 1722.9,596.0 C1735.1,594.8 1747.2,593.7 1759.4,592.9 C1772.9,592.0 1786.5,592.1 1800.0,590.8 C1805.4,590.3 1810.8,588.5 1816.2,586.7 C1821.6,584.9 1827.0,581.7 1832.4,579.4 C1838.9,576.6 1845.4,574.2 1851.9,571.3 C1858.4,568.4 1864.8,565.4 1871.3,561.6 C1876.7,558.4 1882.1,554.5 1887.5,550.2 C1892.9,545.9 1898.3,540.7 1903.7,535.6 C1909.7,530.0 1915.6,523.6 1921.6,517.8 C1926.6,512.9 1931.7,508.5 1936.7,503.2 C1944.5,495.0 1952.2,483.5 1960.0,475.3 C1966.8,468.1 1973.5,460.7 1980.3,455.9 C1990.8,448.5 2001.4,441.8 2011.9,438.9 C2025.7,435.2 2039.4,432.0 2053.2,431.6 C2070.4,431.2 2087.6,431.1 2104.8,430.9" fill="none" stroke="#8000ff" stroke-width="1.6" stroke-linejoin="round"/>
<path d="M329.0,980.6 C406.0,980.6 483.0,980.6 560.0,980.6 C579.9,980.6 599.7,979.3 619.6,978.7 C653.1,977.6 686.5,975.7 720.0,975.5 C770.0,975.2 820.0,975.0 870.0,975.0 C894.3,975.0 918.7,976.1 943.0,977.0 C962.9,977.7 982.7,978.9 1002.6,980.0 C1015.2,980.7 1027.7,982.1 1040.3,982.3 C1083.9,983.1 1127.4,983.1 1171.0,983.5" fill="none" stroke="#ff0000" stroke-width="1.6" stroke-linejoin="round"/>
<path d="M329.0,1063.0 C459.3,1062.7 589.7,1062.0 720.0,1062.0 C870.3,1062.0 1020.7,1062.7 1171.0,1063.0" fill="none" stroke="#ffff00" stroke-width="1.6" stroke-linejoin="round"/>
<path d="M329.0,905.0 C409.7,905.0 490.3,905.0 571.0,905.0 C602.6,905.0 634.2,903.1 665.8,902.1 C683.9,901.5 701.9,900.5 720.0,900.2 C770.1,899.5 820.1,899.0 870.2,899.0 C894.5,899.0 918.7,900.1 943.0,900.9 C962.9,901.5 982.7,902.5 1002.6,903.3 C1027.3,904.3 1052.1,906.1 1076.8,906.5 C1108.2,907.0 1139.6,907.2 1171.0,907.5" fill="none" stroke="#00ff00" stroke-width="1.6" stroke-linejoin="round"/>
<path d="M329.0,962.4 L1171.0,962.4" fill="none" stroke="#00ffff" stroke-width="1.6" stroke-linejoin="round"/>
<path d="M329.0,987.2 C397.5,987.2 466.0,987.2 534.5,987.2 C558.8,987.2 583.2,983.7 607.5,981.1 C626.9,979.0 646.4,972.6 665.8,972.6 C678.8,972.6 691.7,973.0 704.7,973.8 C709.8,974.1 714.9,975.8 720.0,977.0 C729.5,979.3 739.1,984.1 748.6,985.5 C756.7,986.7 764.9,988.0 773.0,988.0 C805.3,988.0 837.7,987.2 870.0,987.2 C879.8,987.2 889.5,992.5 899.3,993.3 C909.9,994.2 920.4,994.2 931.0,995.0 C943.1,996.0 955.3,999.6 967.4,1000.6 C979.1,1001.5 990.9,1002.5 1002.6,1002.5 C1014.4,1002.5 1026.1,1002.5 1037.9,1002.5 C1046.8,1002.5 1055.7,994.9 1064.6,993.3 C1080.8,990.4 1097.0,988.5 1113.2,987.9 C1132.5,987.2 1151.7,987.1 1171.0,986.7" fill="none" stroke="#0000ff" stroke-width="1.6" stroke-linejoin="round"/>
<path d="M329.0,988.0 C419.3,987.7 509.7,987.8 600.0,987.2 C632.5,987.0 664.9,984.3 697.4,984.3 C704.9,984.3 712.5,985.1 720.0,985.5 C733.6,986.1 747.2,987.2 760.8,987.2 C797.2,987.2 833.6,986.7 870.0,986.7 C894.3,986.7 918.7,989.1 943.0,989.1 C955.2,989.1 967.3,989.1 979.5,989.1 C999.8,989.1 1020.0,986.0 1040.3,986.0 C1083.9,986.0 1127.4,986.5 1171.0,986.7" fill="none" stroke="#ff00ff" stroke-width="1.6" stroke-linejoin="round"/>
<path d="M1263.0,983.1 C1283.2,983.9 1303.5,985.2 1323.7,985.5 C1371.5,986.1 1419.4,986.5 1467.2,986.5 C1480.1,986.5 1493.1,980.3 1506.0,976.3 C1518.2,972.6 1530.3,967.2 1542.5,962.9 C1551.4,959.7 1560.4,957.1 1569.3,953.7 C1579.0,950.0 1588.8,941.0 1598.5,941.0 C1610.6,941.0 1622.8,941.9 1634.9,943.5 C1644.7,944.8 1654.5,956.9 1664.3,962.9 C1674.8,969.4 1685.4,979.1 1695.9,981.1 C1709.7,983.7 1723.4,985.5 1737.2,985.5 C1759.9,985.5 1782.6,985.3 1805.3,985.3 C1815.0,985.3 1824.8,997.6 1834.5,1003.0 C1850.7,1011.9 1866.9,1021.1 1883.1,1027.3 C1900.9,1034.1 1918.7,1039.8 1936.5,1043.8 C1947.9,1046.3 1959.2,1049.9 1970.6,1049.9 C1981.1,1049.9 1991.7,1029.4 2002.2,1022.4 C2011.1,1016.5 2020.0,1010.9 2028.9,1007.9 C2054.2,999.3 2079.5,996.5 2104.8,990.8" fill="none" stroke="#ff0000" stroke-width="1.6" stroke-linejoin="round"/>
<path d="M1263.0,925.7 L2105.0,925.3" fill="none" stroke="#00ff00" stroke-width="1.6" stroke-linejoin="round"/>
<path d="M1263.0,986.7 C1331.1,986.7 1399.1,986.7 1467.2,986.7 C1476.1,986.7 1485.1,1008.5 1494.0,1017.6 C1506.1,1030.0 1518.3,1042.0 1530.4,1050.4 C1542.6,1058.9 1554.7,1062.0 1566.9,1071.1 C1578.2,1079.6 1589.6,1108.1 1600.9,1108.1 C1612.2,1108.1 1623.6,1094.7 1634.9,1083.3 C1644.7,1073.4 1654.5,1052.3 1664.3,1037.0 C1674.8,1020.5 1685.4,988.2 1695.9,987.9 C1732.4,986.9 1768.8,987.8 1805.3,986.7 C1808.5,986.6 1811.8,981.0 1815.0,976.3 C1821.5,966.9 1828.0,940.1 1834.5,925.2 C1845.0,901.2 1855.5,862.5 1866.0,862.5 C1901.3,862.5 1936.5,862.5 1971.8,862.5 C1977.1,862.5 1982.3,903.7 1987.6,925.2 C1992.5,945.1 1997.3,986.7 2002.2,986.7 C2036.4,986.7 2070.6,986.7 2104.8,986.7" fill="none" stroke="#0000ff" stroke-width="1.6" stroke-linejoin="round"/>
</svg>
<div style="position:absolute;top:409.16px;font-size:16px;line-height:20.0px;color:#e3e8ef;font-weight:400;font-family:'Liberation Sans', sans-serif;white-space:nowrap;right:1813.00px;text-align:right;">0.021</div>
<div style="position:absolute;top:471.66px;font-size:16px;line-height:20.0px;color:#e3e8ef;font-weight:400;font-family:'Liberation Sans', sans-serif;white-space:nowrap;right:1813.00px;text-align:right;">0.0105</div>
<div style="position:absolute;top:534.16px;font-size:16px;line-height:20.0px;color:#e3e8ef;font-weight:400;font-family:'Liberation Sans', sans-serif;white-space:nowrap;right:1813.00px;text-align:right;">0</div>
<div style="position:absolute;top:596.66px;font-size:16px;line-height:20.0px;color:#e3e8ef;font-weight:400;font-family:'Liberation Sans', sans-serif;white-space:nowrap;right:1813.00px;text-align:right;">0.0105</div>
<div style="position:absolute;top:659.16px;font-size:16px;line-height:20.0px;color:#e3e8ef;font-weight:400;font-family:'Liberation Sans', sans-serif;white-space:nowrap;right:1813.00px;text-align:right;">-0.021</div>
<div style="position:absolute;top:673.26px;font-size:16px;line-height:20.0px;color:#e3e8ef;font-weight:400;font-family:'Liberation Sans', sans-serif;white-space:nowrap;left:365.70px;width:600px;text-align:center;">1</div>
<div style="position:absolute;top:673.26px;font-size:16px;line-height:20.0px;color:#e3e8ef;font-weight:400;font-family:'Liberation Sans', sans-serif;white-space:nowrap;left:702.40px;width:600px;text-align:center;">2</div>
<div style="position:absolute;top:673.26px;font-size:16px;line-height:20.0px;color:#e3e8ef;font-weight:400;font-family:'Liberation Sans', sans-serif;white-space:nowrap;left:29.00px;width:600px;text-align:center;">0</div>
<div style="position:absolute;top:678.27px;font-size:16.6px;line-height:20.75px;color:#e3e8ef;font-weight:400;font-family:'Liberation Sans', sans-serif;white-space:nowrap;left:333.80px;">time</div>
<div style="position:absolute;top:409.16px;font-size:16px;line-height:20.0px;color:#e3e8ef;font-weight:400;font-family:'Liberation Sans', sans-serif;white-space:nowrap;right:879.00px;text-align:right;">0.12</div>
<div style="position:absolute;top:471.66px;font-size:16px;line-height:20.0px;color:#e3e8ef;font-weight:400;font-family:'Liberation Sans', sans-serif;white-space:nowrap;right:879.00px;text-align:right;">0.08</div>
<div style="position:absolute;top:534.16px;font-size:16px;line-height:20.0px;color:#e3e8ef;font-weight:400;font-family:'Liberation Sans', sans-serif;white-space:nowrap;right:879.00px;text-align:right;">0.04</div>
<div style="position:absolute;top:596.66px;font-size:16px;line-height:20.0px;color:#e3e8ef;font-weight:400;font-family:'Liberation Sans', sans-serif;white-space:nowrap;right:879.00px;text-align:right;">0</div>
<div style="position:absolute;top:659.16px;font-size:16px;line-height:20.0px;color:#e3e8ef;font-weight:400;font-family:'Liberation Sans', sans-serif;white-space:nowrap;right:879.00px;text-align:right;">-0.04</div>
<div style="position:absolute;top:673.26px;font-size:16px;line-height:20.0px;color:#e3e8ef;font-weight:400;font-family:'Liberation Sans', sans-serif;white-space:nowrap;left:1299.70px;width:600px;text-align:center;">1</div>
<div style="position:absolute;top:673.26px;font-size:16px;line-height:20.0px;color:#e3e8ef;font-weight:400;font-family:'Liberation Sans', sans-serif;white-space:nowrap;left:1636.40px;width:600px;text-align:center;">2</div>
<div style="position:absolute;top:673.26px;font-size:16px;line-height:20.0px;color:#e3e8ef;font-weight:400;font-family:'Liberation Sans', sans-serif;white-space:nowrap;left:963.00px;width:600px;text-align:center;">0</div>
<div style="position:absolute;top:678.27px;font-size:16.6px;line-height:20.75px;color:#e3e8ef;font-weight:400;font-family:'Liberation Sans', sans-serif;white-space:nowrap;left:1267.80px;">time</div>
<div style="position:absolute;top:853.16px;font-size:16px;line-height:20.0px;color:#e3e8ef;font-weight:400;font-family:'Liberation Sans', sans-serif;white-space:nowrap;right:1813.00px;text-align:right;">4</div>
<div style="position:absolute;top:915.66px;font-size:16px;line-height:20.0px;color:#e3e8ef;font-weight:400;font-family:'Liberation Sans', sans-serif;white-space:nowrap;right:1813.00px;text-align:right;">2</div>
<div style="position:absolute;top:978.16px;font-size:16px;line-height:20.0px;color:#e3e8ef;font-weight:400;font-family:'Liberation Sans', sans-serif;white-space:nowrap;right:1813.00px;text-align:right;">0</div>
<div style="position:absolute;top:1040.66px;font-size:16px;line-height:20.0px;color:#e3e8ef;font-weight:400;font-family:'Liberation Sans', sans-serif;white-space:nowrap;right:1813.00px;text-align:right;">-2</div>
<div style="position:absolute;top:1103.16px;font-size:16px;line-height:20.0px;color:#e3e8ef;font-weight:400;font-family:'Liberation Sans', sans-serif;white-space:nowrap;right:1813.00px;text-align:right;">-4</div>
<div style="position:absolute;top:1117.26px;font-size:16px;line-height:20.0px;color:#e3e8ef;font-weight:400;font-family:'Liberation Sans', sans-serif;white-space:nowrap;left:365.70px;width:600px;text-align:center;">1</div>
<div style="position:absolute;top:1117.26px;font-size:16px;line-height:20.0px;color:#e3e8ef;font-weight:400;font-family:'Liberation Sans', sans-serif;white-space:nowrap;left:702.40px;width:600px;text-align:center;">2</div>
<div style="position:absolute;top:1117.26px;font-size:16px;line-height:20.0px;color:#e3e8ef;font-weight:400;font-family:'Liberation Sans', sans-serif;white-space:nowrap;left:29.00px;width:600px;text-align:center;">0</div>
<div style="position:absolute;top:1122.27px;font-size:16.6px;line-height:20.75px;color:#e3e8ef;font-weight:400;font-family:'Liberation Sans', sans-serif;white-space:nowrap;left:333.80px;">time</div>
<div style="position:absolute;top:853.16px;font-size:16px;line-height:20.0px;color:#e3e8ef;font-weight:400;font-family:'Liberation Sans', sans-serif;white-space:nowrap;right:879.00px;text-align:right;">1</div>
<div style="position:absolute;top:915.66px;font-size:16px;line-height:20.0px;color:#e3e8ef;font-weight:400;font-family:'Liberation Sans', sans-serif;white-space:nowrap;right:879.00px;text-align:right;">0.5</div>
<div style="position:absolute;top:978.16px;font-size:16px;line-height:20.0px;color:#e3e8ef;font-weight:400;font-family:'Liberation Sans', sans-serif;white-space:nowrap;right:879.00px;text-align:right;">0</div>
<div style="position:absolute;top:1040.66px;font-size:16px;line-height:20.0px;color:#e3e8ef;font-weight:400;font-family:'Liberation Sans', sans-serif;white-space:nowrap;right:879.00px;text-align:right;">-0.5</div>
<div style="position:absolute;top:1103.16px;font-size:16px;line-height:20.0px;color:#e3e8ef;font-weight:400;font-family:'Liberation Sans', sans-serif;white-space:nowrap;right:879.00px;text-align:right;">-1</div>
<div style="position:absolute;top:1117.26px;font-size:16px;line-height:20.0px;color:#e3e8ef;font-weight:400;font-family:'Liberation Sans', sans-serif;white-space:nowrap;left:1299.70px;width:600px;text-align:center;">1</div>
<div style="position:absolute;top:1117.26px;font-size:16px;line-height:20.0px;color:#e3e8ef;font-weight:400;font-family:'Liberation Sans', sans-serif;white-space:nowrap;left:1636.40px;width:600px;text-align:center;">2</div>
<div style="position:absolute;top:1117.26px;font-size:16px;line-height:20.0px;color:#e3e8ef;font-weight:400;font-family:'Liberation Sans', sans-serif;white-space:nowrap;left:963.00px;width:600px;text-align:center;">0</div>
<div style="position:absolute;top:1122.27px;font-size:16.6px;line-height:20.75px;color:#e3e8ef;font-weight:400;font-family:'Liberation Sans', sans-serif;white-space:nowrap;left:1267.80px;">time</div>
<div style="position:absolute;left:301px;top:717.5px;width:14px;height:14px;background:#ff3b2f;border-radius:3px;"></div>
<svg style="position:absolute;left:301px;top:717.5px" width="14" height="14" viewBox="0 0 14 14"><path d="M2.9 8.1 L6 11.2 L11.2 4.0" fill="none" stroke="#fff" stroke-width="2.2" stroke-linecap="round" stroke-linejoin="round"/></svg>
<div style="position:absolute;top:713.94px;font-size:15.5px;line-height:19.38px;color:#f3f4f6;font-weight:700;font-family:'Liberation Sans', sans-serif;white-space:nowrap;left:323.20px;">0</div>
<div style="position:absolute;left:329px;top:742px;width:14px;height:14px;background:#ff3b2f;border-radius:3px;"></div>
<svg style="position:absolute;left:329px;top:742px" width="14" height="14" viewBox="0 0 14 14"><path d="M2.9 8.1 L6 11.2 L11.2 4.0" fill="none" stroke="#fff" stroke-width="2.2" stroke-linecap="round" stroke-linejoin="round"/></svg>
<div style="position:absolute;top:738.67px;font-size:12.9px;line-height:16.12px;color:#f3f4f6;font-weight:400;font-family:'Liberation Sans', sans-serif;white-space:nowrap;left:351.00px;">observation.state</div>
<div style="position:absolute;top:738.57px;font-size:13px;line-height:16.25px;color:#f9b466;font-weight:400;font-family:'Liberation Sans', sans-serif;white-space:nowrap;right:1582.80px;text-align:right;">0.00</div>
<div style="position:absolute;left:329px;top:763.8px;width:14px;height:14px;background:#ff3b2f;border-radius:3px;"></div>
<svg style="position:absolute;left:329px;top:763.8px" width="14" height="14" viewBox="0 0 14 14"><path d="M2.9 8.1 L6 11.2 L11.2 4.0" fill="none" stroke="#fff" stroke-width="2.2" stroke-linecap="round" stroke-linejoin="round"/></svg>
<div style="position:absolute;top:760.37px;font-size:12.9px;line-height:16.12px;color:#f3f4f6;font-weight:400;font-family:'Liberation Sans', sans-serif;white-space:nowrap;left:351.00px;">next.reward</div>
<div style="position:absolute;top:760.27px;font-size:13px;line-height:16.25px;color:#f9b466;font-weight:400;font-family:'Liberation Sans', sans-serif;white-space:nowrap;right:1582.80px;text-align:right;">0.00</div>
<div style="position:absolute;left:567px;top:717.5px;width:14px;height:14px;background:#c0ff14;border-radius:3px;"></div>
<svg style="position:absolute;left:567px;top:717.5px" width="14" height="14" viewBox="0 0 14 14"><path d="M2.9 8.1 L6 11.2 L11.2 4.0" fill="none" stroke="#fff" stroke-width="2.2" stroke-linecap="round" stroke-linejoin="round"/></svg>
<div style="position:absolute;left:589.40px;top:714.53px;font-size:15px;line-height:18.75px;color:#f3f4f6;white-space:nowrap;font-family:'Liberation Sans', sans-serif">observation.state<span style="display:inline-block;width:2px;height:16px;background:#d1d5db;margin:0 5px 0 6px;vertical-align:-3px"></span>2</div>
<div style="position:absolute;top:714.53px;font-size:15px;line-height:18.75px;color:#f9b466;font-weight:400;font-family:'Liberation Sans', sans-serif;white-space:nowrap;right:1316.50px;text-align:right;">-0.00</div>
<div style="position:absolute;left:833px;top:717.5px;width:14px;height:14px;background:#1ff58a;border-radius:3px;"></div>
<svg style="position:absolute;left:833px;top:717.5px" width="14" height="14" viewBox="0 0 14 14"><path d="M2.9 8.1 L6 11.2 L11.2 4.0" fill="none" stroke="#fff" stroke-width="2.2" stroke-linecap="round" stroke-linejoin="round"/></svg>
<div style="position:absolute;left:855.40px;top:714.53px;font-size:15px;line-height:18.75px;color:#f3f4f6;white-space:nowrap;font-family:'Liberation Sans', sans-serif">observation.state<span style="display:inline-block;width:2px;height:16px;background:#d1d5db;margin:0 5px 0 6px;vertical-align:-3px"></span>4</div>
<div style="position:absolute;top:714.53px;font-size:15px;line-height:18.75px;color:#f9b466;font-weight:400;font-family:'Liberation Sans', sans-serif;white-space:nowrap;right:1050.50px;text-align:right;">0.00</div>
<div style="position:absolute;left:301px;top:805.5px;width:14px;height:14px;background:#1a6dff;border-radius:3px;"></div>
<svg style="position:absolute;left:301px;top:805.5px" width="14" height="14" viewBox="0 0 14 14"><path d="M2.9 8.1 L6 11.2 L11.2 4.0" fill="none" stroke="#fff" stroke-width="2.2" stroke-linecap="round" stroke-linejoin="round"/></svg>
<div style="position:absolute;left:323.40px;top:802.53px;font-size:15px;line-height:18.75px;color:#f3f4f6;white-space:nowrap;font-family:'Liberation Sans', sans-serif">observation.state<span style="display:inline-block;width:2px;height:16px;background:#d1d5db;margin:0 5px 0 6px;vertical-align:-3px"></span>7</div>
<div style="position:absolute;top:802.53px;font-size:15px;line-height:18.75px;color:#f9b466;font-weight:400;font-family:'Liberation Sans', sans-serif;white-space:nowrap;right:1582.50px;text-align:right;">-0.00</div>
<div style="position:absolute;left:567px;top:805.5px;width:14px;height:14px;background:#d21ff7;border-radius:3px;"></div>
<svg style="position:absolute;left:567px;top:805.5px" width="14" height="14" viewBox="0 0 14 14"><path d="M2.9 8.1 L6 11.2 L11.2 4.0" fill="none" stroke="#fff" stroke-width="2.2" stroke-linecap="round" stroke-linejoin="round"/></svg>
<div style="position:absolute;left:589.40px;top:802.53px;font-size:15px;line-height:18.75px;color:#f3f4f6;white-space:nowrap;font-family:'Liberation Sans', sans-serif">observation.state<span style="display:inline-block;width:2px;height:16px;background:#d1d5db;margin:0 5px 0 6px;vertical-align:-3px"></span>9</div>
<div style="position:absolute;top:802.53px;font-size:15px;line-height:18.75px;color:#f9b466;font-weight:400;font-family:'Liberation Sans', sans-serif;white-space:nowrap;right:1316.50px;text-align:right;">0.00</div>
<div style="position:absolute;left:1235px;top:717.5px;width:14px;height:14px;background:#ff3b2f;border-radius:3px;"></div>
<svg style="position:absolute;left:1235px;top:717.5px" width="14" height="14" viewBox="0 0 14 14"><path d="M2.9 8.1 L6 11.2 L11.2 4.0" fill="none" stroke="#fff" stroke-width="2.2" stroke-linecap="round" stroke-linejoin="round"/></svg>
<div style="position:absolute;left:1257.40px;top:714.53px;font-size:15px;line-height:18.75px;color:#f3f4f6;white-space:nowrap;font-family:'Liberation Sans', sans-serif">observation.state<span style="display:inline-block;width:2px;height:16px;background:#d1d5db;margin:0 5px 0 6px;vertical-align:-3px"></span>11</div>
<div style="position:absolute;top:714.53px;font-size:15px;line-height:18.75px;color:#f9b466;font-weight:400;font-family:'Liberation Sans', sans-serif;white-space:nowrap;right:648.50px;text-align:right;">0.00</div>
<div style="position:absolute;left:1501px;top:717.5px;width:14px;height:14px;background:#86ff1c;border-radius:3px;"></div>
<svg style="position:absolute;left:1501px;top:717.5px" width="14" height="14" viewBox="0 0 14 14"><path d="M2.9 8.1 L6 11.2 L11.2 4.0" fill="none" stroke="#fff" stroke-width="2.2" stroke-linecap="round" stroke-linejoin="round"/></svg>
<div style="position:absolute;left:1523.40px;top:714.53px;font-size:15px;line-height:18.75px;color:#f3f4f6;white-space:nowrap;font-family:'Liberation Sans', sans-serif">observation.state<span style="display:inline-block;width:2px;height:16px;background:#d1d5db;margin:0 5px 0 6px;vertical-align:-3px"></span>13</div>
<div style="position:absolute;top:714.53px;font-size:15px;line-height:18.75px;color:#f9b466;font-weight:400;font-family:'Liberation Sans', sans-serif;white-space:nowrap;right:382.50px;text-align:right;">0.00</div>
<div style="position:absolute;left:1767px;top:717.5px;width:14px;height:14px;background:#22e0ff;border-radius:3px;"></div>
<svg style="position:absolute;left:1767px;top:717.5px" width="14" height="14" viewBox="0 0 14 14"><path d="M2.9 8.1 L6 11.2 L11.2 4.0" fill="none" stroke="#fff" stroke-width="2.2" stroke-linecap="round" stroke-linejoin="round"/></svg>
<div style="position:absolute;left:1789.40px;top:714.53px;font-size:15px;line-height:18.75px;color:#f3f4f6;white-space:nowrap;font-family:'Liberation Sans', sans-serif">observation.state<span style="display:inline-block;width:2px;height:16px;background:#d1d5db;margin:0 5px 0 6px;vertical-align:-3px"></span>16</div>
<div style="position:absolute;top:714.53px;font-size:15px;line-height:18.75px;color:#f9b466;font-weight:400;font-family:'Liberation Sans', sans-serif;white-space:nowrap;right:116.50px;text-align:right;">-0.00</div>
<div style="position:absolute;left:1235px;top:753.5px;width:14px;height:14px;background:#8f24ff;border-radius:3px;"></div>
<svg style="position:absolute;left:1235px;top:753.5px" width="14" height="14" viewBox="0 0 14 14"><path d="M2.9 8.1 L6 11.2 L11.2 4.0" fill="none" stroke="#fff" stroke-width="2.2" stroke-linecap="round" stroke-linejoin="round"/></svg>
<div style="position:absolute;left:1257.40px;top:750.53px;font-size:15px;line-height:18.75px;color:#f3f4f6;white-space:nowrap;font-family:'Liberation Sans', sans-serif">observation.state<span style="display:inline-block;width:2px;height:16px;background:#d1d5db;margin:0 5px 0 6px;vertical-align:-3px"></span>17</div>
<div style="position:absolute;top:750.53px;font-size:15px;line-height:18.75px;color:#f9b466;font-weight:400;font-family:'Liberation Sans', sans-serif;white-space:nowrap;right:648.50px;text-align:right;">0.08</div>
<div style="position:absolute;left:301px;top:1161.7px;width:14px;height:14px;background:#ff3b2f;border-radius:3px;"></div>
<svg style="position:absolute;left:301px;top:1161.7px" width="14" height="14" viewBox="0 0 14 14"><path d="M2.9 8.1 L6 11.2 L11.2 4.0" fill="none" stroke="#fff" stroke-width="2.2" stroke-linecap="round" stroke-linejoin="round"/></svg>
<div style="position:absolute;left:323.40px;top:1158.73px;font-size:15px;line-height:18.75px;color:#f3f4f6;white-space:nowrap;font-family:'Liberation Sans', sans-serif">observation.state<span style="display:inline-block;width:2px;height:16px;background:#d1d5db;margin:0 5px 0 6px;vertical-align:-3px"></span>1</div>
<div style="position:absolute;top:1158.73px;font-size:15px;line-height:18.75px;color:#f9b466;font-weight:400;font-family:'Liberation Sans', sans-serif;white-space:nowrap;right:1582.50px;text-align:right;">0.19</div>
<div style="position:absolute;left:567px;top:1161.7px;width:14px;height:14px;background:#f5ff1f;border-radius:3px;"></div>
<svg style="position:absolute;left:567px;top:1161.7px" width="14" height="14" viewBox="0 0 14 14"><path d="M2.9 8.1 L6 11.2 L11.2 4.0" fill="none" stroke="#fff" stroke-width="2.2" stroke-linecap="round" stroke-linejoin="round"/></svg>
<div style="position:absolute;left:589.40px;top:1158.73px;font-size:15px;line-height:18.75px;color:#f3f4f6;white-space:nowrap;font-family:'Liberation Sans', sans-serif">observation.state<span style="display:inline-block;width:2px;height:16px;background:#d1d5db;margin:0 5px 0 6px;vertical-align:-3px"></span>3</div>
<div style="position:absolute;top:1158.73px;font-size:15px;line-height:18.75px;color:#f9b466;font-weight:400;font-family:'Liberation Sans', sans-serif;white-space:nowrap;right:1316.50px;text-align:right;">-2.43</div>
<div style="position:absolute;left:833px;top:1161.7px;width:14px;height:14px;background:#22f53a;border-radius:3px;"></div>
<svg style="position:absolute;left:833px;top:1161.7px" width="14" height="14" viewBox="0 0 14 14"><path d="M2.9 8.1 L6 11.2 L11.2 4.0" fill="none" stroke="#fff" stroke-width="2.2" stroke-linecap="round" stroke-linejoin="round"/></svg>
<div style="position:absolute;left:855.40px;top:1158.73px;font-size:15px;line-height:18.75px;color:#f3f4f6;white-space:nowrap;font-family:'Liberation Sans', sans-serif">observation.state<span style="display:inline-block;width:2px;height:16px;background:#d1d5db;margin:0 5px 0 6px;vertical-align:-3px"></span>5</div>
<div style="position:absolute;top:1158.73px;font-size:15px;line-height:18.75px;color:#f9b466;font-weight:400;font-family:'Liberation Sans', sans-serif;white-space:nowrap;right:1050.50px;text-align:right;">2.63</div>
<div style="position:absolute;left:301px;top:1197.7px;width:14px;height:14px;background:#22e0ff;border-radius:3px;"></div>
<svg style="position:absolute;left:301px;top:1197.7px" width="14" height="14" viewBox="0 0 14 14"><path d="M2.9 8.1 L6 11.2 L11.2 4.0" fill="none" stroke="#fff" stroke-width="2.2" stroke-linecap="round" stroke-linejoin="round"/></svg>
<div style="position:absolute;left:323.40px;top:1194.73px;font-size:15px;line-height:18.75px;color:#f3f4f6;white-space:nowrap;font-family:'Liberation Sans', sans-serif">observation.state<span style="display:inline-block;width:2px;height:16px;background:#d1d5db;margin:0 5px 0 6px;vertical-align:-3px"></span>6</div>
<div style="position:absolute;top:1194.73px;font-size:15px;line-height:18.75px;color:#f9b466;font-weight:400;font-family:'Liberation Sans', sans-serif;white-space:nowrap;right:1582.50px;text-align:right;">0.79</div>
<div style="position:absolute;left:567px;top:1197.7px;width:14px;height:14px;background:#3b24ff;border-radius:3px;"></div>
<svg style="position:absolute;left:567px;top:1197.7px" width="14" height="14" viewBox="0 0 14 14"><path d="M2.9 8.1 L6 11.2 L11.2 4.0" fill="none" stroke="#fff" stroke-width="2.2" stroke-linecap="round" stroke-linejoin="round"/></svg>
<div style="position:absolute;left:589.40px;top:1194.73px;font-size:15px;line-height:18.75px;color:#f3f4f6;white-space:nowrap;font-family:'Liberation Sans', sans-serif">observation.state<span style="display:inline-block;width:2px;height:16px;background:#d1d5db;margin:0 5px 0 6px;vertical-align:-3px"></span>8</div>
<div style="position:absolute;top:1194.73px;font-size:15px;line-height:18.75px;color:#f9b466;font-weight:400;font-family:'Liberation Sans', sans-serif;white-space:nowrap;right:1316.50px;text-align:right;">-0.00</div>
<div style="position:absolute;left:833px;top:1197.7px;width:14px;height:14px;background:#ff1ff5;border-radius:3px;"></div>
<svg style="position:absolute;left:833px;top:1197.7px" width="14" height="14" viewBox="0 0 14 14"><path d="M2.9 8.1 L6 11.2 L11.2 4.0" fill="none" stroke="#fff" stroke-width="2.2" stroke-linecap="round" stroke-linejoin="round"/></svg>
<div style="position:absolute;left:855.40px;top:1194.73px;font-size:15px;line-height:18.75px;color:#f3f4f6;white-space:nowrap;font-family:'Liberation Sans', sans-serif">observation.state<span style="display:inline-block;width:2px;height:16px;background:#d1d5db;margin:0 5px 0 6px;vertical-align:-3px"></span>10</div>
<div style="position:absolute;top:1194.73px;font-size:15px;line-height:18.75px;color:#f9b466;font-weight:400;font-family:'Liberation Sans', sans-serif;white-space:nowrap;right:1050.50px;text-align:right;">-0.00</div>
<div style="position:absolute;left:1235px;top:1161.7px;width:14px;height:14px;background:#ff3b2f;border-radius:3px;"></div>
<svg style="position:absolute;left:1235px;top:1161.7px" width="14" height="14" viewBox="0 0 14 14"><path d="M2.9 8.1 L6 11.2 L11.2 4.0" fill="none" stroke="#fff" stroke-width="2.2" stroke-linecap="round" stroke-linejoin="round"/></svg>
<div style="position:absolute;left:1257.40px;top:1158.73px;font-size:15px;line-height:18.75px;color:#f3f4f6;white-space:nowrap;font-family:'Liberation Sans', sans-serif">observation.state<span style="display:inline-block;width:2px;height:16px;background:#d1d5db;margin:0 5px 0 6px;vertical-align:-3px"></span>12</div>
<div style="position:absolute;top:1158.73px;font-size:15px;line-height:18.75px;color:#f9b466;font-weight:400;font-family:'Liberation Sans', sans-serif;white-space:nowrap;right:648.50px;text-align:right;">0.00</div>
<div style="position:absolute;left:1501px;top:1161.7px;width:14px;height:14px;background:#22f53a;border-radius:3px;"></div>
<svg style="position:absolute;left:1501px;top:1161.7px" width="14" height="14" viewBox="0 0 14 14"><path d="M2.9 8.1 L6 11.2 L11.2 4.0" fill="none" stroke="#fff" stroke-width="2.2" stroke-linecap="round" stroke-linejoin="round"/></svg>
<div style="position:absolute;left:1523.40px;top:1158.73px;font-size:15px;line-height:18.75px;color:#f3f4f6;white-space:nowrap;font-family:'Liberation Sans', sans-serif">observation.state<span style="display:inline-block;width:2px;height:16px;background:#d1d5db;margin:0 5px 0 6px;vertical-align:-3px"></span>15</div>
<div style="position:absolute;top:1158.73px;font-size:15px;line-height:18.75px;color:#f9b466;font-weight:400;font-family:'Liberation Sans', sans-serif;white-space:nowrap;right:382.50px;text-align:right;">0.49</div>
<div style="position:absolute;left:1767px;top:1161.7px;width:14px;height:14px;background:#3b24ff;border-radius:3px;"></div>
<svg style="position:absolute;left:1767px;top:1161.7px" width="14" height="14" viewBox="0 0 14 14"><path d="M2.9 8.1 L6 11.2 L11.2 4.0" fill="none" stroke="#fff" stroke-width="2.2" stroke-linecap="round" stroke-linejoin="round"/></svg>
<div style="position:absolute;left:1789.40px;top:1158.73px;font-size:15px;line-height:18.75px;color:#f3f4f6;white-space:nowrap;font-family:'Liberation Sans', sans-serif">action<span style="display:inline-block;width:2px;height:16px;background:#d1d5db;margin:0 5px 0 6px;vertical-align:-3px"></span>delta_z_ee</div>
<div style="position:absolute;top:1158.73px;font-size:15px;line-height:18.75px;color:#f9b466;font-weight:400;font-family:'Liberation Sans', sans-serif;white-space:nowrap;right:116.50px;text-align:right;">0.00</div>
<div style="position:absolute;left:269px;top:114px;width:242px;height:23px;background:#1f2937;border-radius:7px 7px 0 0;"></div>
<div style="position:absolute;top:115.63px;font-size:15px;line-height:18.75px;color:#e5e7eb;font-weight:400;font-family:'Liberation Sans', sans-serif;white-space:nowrap;left:277.20px;">observation.images.front</div>
<svg style="position:absolute;left:456px;top:118px" width="14" height="14" viewBox="0 0 14 14" fill="none" stroke="#e5e7eb" stroke-width="1.6">
<path d="M1.5 4.5 V1.5 H4.5 M9.5 1.5 H12.5 V4.5 M12.5 9.5 V12.5 H9.5 M4.5 12.5 H1.5 V9.5"/></svg>
<svg style="position:absolute;left:486px;top:119px" width="12" height="12" viewBox="0 0 12 12" fill="none" stroke="#f3f4f6" stroke-width="2.1" stroke-linecap="round">
<path d="M2 2 L10 10 M10 2 L2 10"/></svg>
<div style="position:absolute;left:519px;top:114px;width:242px;height:23px;background:#1f2937;border-radius:7px 7px 0 0;"></div>
<div style="position:absolute;top:115.63px;font-size:15px;line-height:18.75px;color:#e5e7eb;font-weight:400;font-family:'Liberation Sans', sans-serif;white-space:nowrap;left:527.20px;">observation.images.wrist</div>
<svg style="position:absolute;left:706px;top:118px" width="14" height="14" viewBox="0 0 14 14" fill="none" stroke="#e5e7eb" stroke-width="1.6">
<path d="M1.5 4.5 V1.5 H4.5 M9.5 1.5 H12.5 V4.5 M12.5 9.5 V12.5 H9.5 M4.5 12.5 H1.5 V9.5"/></svg>
<svg style="position:absolute;left:736px;top:119px" width="12" height="12" viewBox="0 0 12 12" fill="none" stroke="#f3f4f6" stroke-width="2.1" stroke-linecap="round">
<path d="M2 2 L10 10 M10 2 L2 10"/></svg>
<svg style="position:absolute;left:269px;top:136px" width="242" height="242" viewBox="0 0 242 242">
<defs><filter id="fblur" x="-5%" y="-5%" width="110%" height="110%"><feGaussianBlur stdDeviation="0.9"/></filter><linearGradient id="fsky" x1="0" y1="0" x2="0" y2="1"><stop offset="0" stop-color="#223f66"/><stop offset="1" stop-color="#2c5586"/></linearGradient><linearGradient id="ffloor" x1="0" y1="0" x2="0" y2="1"><stop offset="0" stop-color="#2a5585"/><stop offset="0.4" stop-color="#3d6ea5"/><stop offset="1" stop-color="#5f92c8"/></linearGradient></defs>
<rect x="0" y="0" width="242" height="242" fill="url(#ffloor)"/>
<g filter="url(#fblur)">
<rect x="0" y="0" width="242" height="38" fill="url(#fsky)"/>
<path d="M-152.8,25.7 L-130.0,25.7 L-152.2,29.4 L-177.1,29.4Z" fill="#0f2f58" fill-opacity="0.30"/>
<path d="M-107.2,25.7 L-84.3,25.7 L-102.6,29.4 L-127.4,29.4Z" fill="#0f2f58" fill-opacity="0.30"/>
<path d="M-61.5,25.7 L-38.7,25.7 L-52.9,29.4 L-77.7,29.4Z" fill="#0f2f58" fill-opacity="0.30"/>
<path d="M-15.9,25.7 L6.9,25.7 L-3.2,29.4 L-28.0,29.4Z" fill="#0f2f58" fill-opacity="0.30"/>
<path d="M29.7,25.7 L52.6,25.7 L46.5,29.4 L21.6,29.4Z" fill="#0f2f58" fill-opacity="0.30"/>
<path d="M75.4,25.7 L98.2,25.7 L96.2,29.4 L71.3,29.4Z" fill="#0f2f58" fill-opacity="0.30"/>
<path d="M121.0,25.7 L143.8,25.7 L145.8,29.4 L121.0,29.4Z" fill="#0f2f58" fill-opacity="0.30"/>
<path d="M166.6,25.7 L189.4,25.7 L195.5,29.4 L170.7,29.4Z" fill="#0f2f58" fill-opacity="0.30"/>
<path d="M212.3,25.7 L235.1,25.7 L245.2,29.4 L220.4,29.4Z" fill="#0f2f58" fill-opacity="0.30"/>
<path d="M257.9,25.7 L280.7,25.7 L294.9,29.4 L270.0,29.4Z" fill="#0f2f58" fill-opacity="0.30"/>
<path d="M303.5,25.7 L326.3,25.7 L344.6,29.4 L319.7,29.4Z" fill="#0f2f58" fill-opacity="0.30"/>
<path d="M349.2,25.7 L372.0,25.7 L394.2,29.4 L369.4,29.4Z" fill="#0f2f58" fill-opacity="0.30"/>
<path d="M-152.2,29.4 L-127.4,29.4 L-151.6,33.7 L-178.8,33.7Z" fill="#0f2f58" fill-opacity="0.30"/>
<path d="M-102.6,29.4 L-77.7,29.4 L-97.1,33.7 L-124.3,33.7Z" fill="#0f2f58" fill-opacity="0.30"/>
<path d="M-52.9,29.4 L-28.0,29.4 L-42.5,33.7 L-69.8,33.7Z" fill="#0f2f58" fill-opacity="0.30"/>
<path d="M-3.2,29.4 L21.6,29.4 L12.0,33.7 L-15.3,33.7Z" fill="#0f2f58" fill-opacity="0.30"/>
<path d="M46.5,29.4 L71.3,29.4 L66.5,33.7 L39.2,33.7Z" fill="#0f2f58" fill-opacity="0.30"/>
<path d="M96.2,29.4 L121.0,29.4 L121.0,33.7 L93.7,33.7Z" fill="#0f2f58" fill-opacity="0.30"/>
<path d="M145.8,29.4 L170.7,29.4 L175.5,33.7 L148.3,33.7Z" fill="#0f2f58" fill-opacity="0.30"/>
<path d="M195.5,29.4 L220.4,29.4 L230.0,33.7 L202.8,33.7Z" fill="#0f2f58" fill-opacity="0.30"/>
<path d="M245.2,29.4 L270.0,29.4 L284.5,33.7 L257.3,33.7Z" fill="#0f2f58" fill-opacity="0.30"/>
<path d="M294.9,29.4 L319.7,29.4 L339.1,33.7 L311.8,33.7Z" fill="#0f2f58" fill-opacity="0.30"/>
<path d="M344.6,29.4 L369.4,29.4 L393.6,33.7 L366.3,33.7Z" fill="#0f2f58" fill-opacity="0.30"/>
<path d="M394.2,29.4 L419.1,29.4 L448.1,33.7 L420.8,33.7Z" fill="#0f2f58" fill-opacity="0.30"/>
<path d="M-206.1,33.7 L-178.8,33.7 L-211.2,38.9 L-241.4,38.9Z" fill="#0f2f58" fill-opacity="0.30"/>
<path d="M-151.6,33.7 L-124.3,33.7 L-150.8,38.9 L-181.0,38.9Z" fill="#0f2f58" fill-opacity="0.30"/>
<path d="M-97.1,33.7 L-69.8,33.7 L-90.4,38.9 L-120.6,38.9Z" fill="#0f2f58" fill-opacity="0.30"/>
<path d="M-42.5,33.7 L-15.3,33.7 L-30.0,38.9 L-60.2,38.9Z" fill="#0f2f58" fill-opacity="0.30"/>
<path d="M12.0,33.7 L39.2,33.7 L30.4,38.9 L0.2,38.9Z" fill="#0f2f58" fill-opacity="0.30"/>
<path d="M66.5,33.7 L93.7,33.7 L90.8,38.9 L60.6,38.9Z" fill="#0f2f58" fill-opacity="0.30"/>
<path d="M121.0,33.7 L148.3,33.7 L151.2,38.9 L121.0,38.9Z" fill="#0f2f58" fill-opacity="0.30"/>
<path d="M175.5,33.7 L202.8,33.7 L211.6,38.9 L181.4,38.9Z" fill="#0f2f58" fill-opacity="0.30"/>
<path d="M230.0,33.7 L257.3,33.7 L272.0,38.9 L241.8,38.9Z" fill="#0f2f58" fill-opacity="0.30"/>
<path d="M284.5,33.7 L311.8,33.7 L332.4,38.9 L302.2,38.9Z" fill="#0f2f58" fill-opacity="0.30"/>
<path d="M339.1,33.7 L366.3,33.7 L392.8,38.9 L362.6,38.9Z" fill="#0f2f58" fill-opacity="0.30"/>
<path d="M393.6,33.7 L420.8,33.7 L453.2,38.9 L423.0,38.9Z" fill="#0f2f58" fill-opacity="0.30"/>
<path d="M-211.2,38.9 L-181.0,38.9 L-217.5,45.4 L-251.3,45.4Z" fill="#0f2f58" fill-opacity="0.30"/>
<path d="M-150.8,38.9 L-120.6,38.9 L-149.8,45.4 L-183.6,45.4Z" fill="#0f2f58" fill-opacity="0.30"/>
<path d="M-90.4,38.9 L-60.2,38.9 L-82.1,45.4 L-115.9,45.4Z" fill="#0f2f58" fill-opacity="0.30"/>
<path d="M-30.0,38.9 L0.2,38.9 L-14.4,45.4 L-48.2,45.4Z" fill="#0f2f58" fill-opacity="0.30"/>
<path d="M30.4,38.9 L60.6,38.9 L53.3,45.4 L19.5,45.4Z" fill="#0f2f58" fill-opacity="0.30"/>
<path d="M90.8,38.9 L121.0,38.9 L121.0,45.4 L87.2,45.4Z" fill="#0f2f58" fill-opacity="0.30"/>
<path d="M151.2,38.9 L181.4,38.9 L188.7,45.4 L154.8,45.4Z" fill="#0f2f58" fill-opacity="0.30"/>
<path d="M211.6,38.9 L241.8,38.9 L256.4,45.4 L222.5,45.4Z" fill="#0f2f58" fill-opacity="0.30"/>
<path d="M272.0,38.9 L302.2,38.9 L324.1,45.4 L290.2,45.4Z" fill="#0f2f58" fill-opacity="0.30"/>
<path d="M332.4,38.9 L362.6,38.9 L391.8,45.4 L357.9,45.4Z" fill="#0f2f58" fill-opacity="0.30"/>
<path d="M392.8,38.9 L423.0,38.9 L459.5,45.4 L425.6,45.4Z" fill="#0f2f58" fill-opacity="0.30"/>
<path d="M453.2,38.9 L483.4,38.9 L527.2,45.4 L493.3,45.4Z" fill="#0f2f58" fill-opacity="0.30"/>
<path d="M-285.2,45.4 L-251.3,45.4 L-302.5,53.8 L-341.0,53.8Z" fill="#0f2f58" fill-opacity="0.30"/>
<path d="M-217.5,45.4 L-183.6,45.4 L-225.5,53.8 L-264.0,53.8Z" fill="#0f2f58" fill-opacity="0.30"/>
<path d="M-149.8,45.4 L-115.9,45.4 L-148.5,53.8 L-187.0,53.8Z" fill="#0f2f58" fill-opacity="0.30"/>
<path d="M-82.1,45.4 L-48.2,45.4 L-71.5,53.8 L-110.0,53.8Z" fill="#0f2f58" fill-opacity="0.30"/>
<path d="M-14.4,45.4 L19.5,45.4 L5.5,53.8 L-33.0,53.8Z" fill="#0f2f58" fill-opacity="0.30"/>
<path d="M53.3,45.4 L87.2,45.4 L82.5,53.8 L44.0,53.8Z" fill="#0f2f58" fill-opacity="0.30"/>
<path d="M121.0,45.4 L154.8,45.4 L159.5,53.8 L121.0,53.8Z" fill="#0f2f58" fill-opacity="0.30"/>
<path d="M188.7,45.4 L222.5,45.4 L236.5,53.8 L198.0,53.8Z" fill="#0f2f58" fill-opacity="0.30"/>
<path d="M256.4,45.4 L290.2,45.4 L313.5,53.8 L275.0,53.8Z" fill="#0f2f58" fill-opacity="0.30"/>
<path d="M324.1,45.4 L357.9,45.4 L390.5,53.8 L352.0,53.8Z" fill="#0f2f58" fill-opacity="0.30"/>
<path d="M391.8,45.4 L425.6,45.4 L467.5,53.8 L429.0,53.8Z" fill="#0f2f58" fill-opacity="0.30"/>
<path d="M459.5,45.4 L493.3,45.4 L544.5,53.8 L506.0,53.8Z" fill="#0f2f58" fill-opacity="0.30"/>
<path d="M-302.5,53.8 L-264.0,53.8 L-325.4,64.7 L-370.0,64.7Z" fill="#0f2f58" fill-opacity="0.30"/>
<path d="M-225.5,53.8 L-187.0,53.8 L-236.1,64.7 L-280.8,64.7Z" fill="#0f2f58" fill-opacity="0.30"/>
<path d="M-148.5,53.8 L-110.0,53.8 L-146.8,64.7 L-191.5,64.7Z" fill="#0f2f58" fill-opacity="0.30"/>
<path d="M-71.5,53.8 L-33.0,53.8 L-57.6,64.7 L-102.2,64.7Z" fill="#0f2f58" fill-opacity="0.30"/>
<path d="M5.5,53.8 L44.0,53.8 L31.7,64.7 L-12.9,64.7Z" fill="#0f2f58" fill-opacity="0.30"/>
<path d="M82.5,53.8 L121.0,53.8 L121.0,64.7 L76.4,64.7Z" fill="#0f2f58" fill-opacity="0.30"/>
<path d="M159.5,53.8 L198.0,53.8 L210.3,64.7 L165.6,64.7Z" fill="#0f2f58" fill-opacity="0.30"/>
<path d="M236.5,53.8 L275.0,53.8 L299.6,64.7 L254.9,64.7Z" fill="#0f2f58" fill-opacity="0.30"/>
<path d="M313.5,53.8 L352.0,53.8 L388.8,64.7 L344.2,64.7Z" fill="#0f2f58" fill-opacity="0.30"/>
<path d="M390.5,53.8 L429.0,53.8 L478.1,64.7 L433.5,64.7Z" fill="#0f2f58" fill-opacity="0.30"/>
<path d="M467.5,53.8 L506.0,53.8 L567.4,64.7 L522.8,64.7Z" fill="#0f2f58" fill-opacity="0.30"/>
<path d="M544.5,53.8 L583.0,53.8 L656.7,64.7 L612.0,64.7Z" fill="#0f2f58" fill-opacity="0.30"/>
<path d="M-414.7,64.7 L-370.0,64.7 L-463.2,79.8 L-516.3,79.8Z" fill="#0f2f58" fill-opacity="0.30"/>
<path d="M-325.4,64.7 L-280.8,64.7 L-357.0,79.8 L-410.1,79.8Z" fill="#0f2f58" fill-opacity="0.30"/>
<path d="M-236.1,64.7 L-191.5,64.7 L-250.7,79.8 L-303.8,79.8Z" fill="#0f2f58" fill-opacity="0.30"/>
<path d="M-146.8,64.7 L-102.2,64.7 L-144.5,79.8 L-197.6,79.8Z" fill="#0f2f58" fill-opacity="0.30"/>
<path d="M-57.6,64.7 L-12.9,64.7 L-38.3,79.8 L-91.4,79.8Z" fill="#0f2f58" fill-opacity="0.30"/>
<path d="M31.7,64.7 L76.4,64.7 L67.9,79.8 L14.8,79.8Z" fill="#0f2f58" fill-opacity="0.30"/>
<path d="M121.0,64.7 L165.6,64.7 L174.1,79.8 L121.0,79.8Z" fill="#0f2f58" fill-opacity="0.30"/>
<path d="M210.3,64.7 L254.9,64.7 L280.3,79.8 L227.2,79.8Z" fill="#0f2f58" fill-opacity="0.30"/>
<path d="M299.6,64.7 L344.2,64.7 L386.5,79.8 L333.4,79.8Z" fill="#0f2f58" fill-opacity="0.30"/>
<path d="M388.8,64.7 L433.5,64.7 L492.7,79.8 L439.6,79.8Z" fill="#0f2f58" fill-opacity="0.30"/>
<path d="M478.1,64.7 L522.8,64.7 L599.0,79.8 L545.8,79.8Z" fill="#0f2f58" fill-opacity="0.30"/>
<path d="M567.4,64.7 L612.0,64.7 L705.2,79.8 L652.1,79.8Z" fill="#0f2f58" fill-opacity="0.30"/>
<path d="M-463.2,79.8 L-410.1,79.8 L-534.4,102.0 L-599.9,102.0Z" fill="#0f2f58" fill-opacity="0.30"/>
<path d="M-357.0,79.8 L-303.8,79.8 L-403.3,102.0 L-468.8,102.0Z" fill="#0f2f58" fill-opacity="0.30"/>
<path d="M-250.7,79.8 L-197.6,79.8 L-272.2,102.0 L-337.7,102.0Z" fill="#0f2f58" fill-opacity="0.30"/>
<path d="M-144.5,79.8 L-91.4,79.8 L-141.1,102.0 L-206.7,102.0Z" fill="#0f2f58" fill-opacity="0.30"/>
<path d="M-38.3,79.8 L14.8,79.8 L-10.1,102.0 L-75.6,102.0Z" fill="#0f2f58" fill-opacity="0.30"/>
<path d="M67.9,79.8 L121.0,79.8 L121.0,102.0 L55.5,102.0Z" fill="#0f2f58" fill-opacity="0.30"/>
<path d="M174.1,79.8 L227.2,79.8 L252.1,102.0 L186.5,102.0Z" fill="#0f2f58" fill-opacity="0.30"/>
<path d="M280.3,79.8 L333.4,79.8 L383.1,102.0 L317.6,102.0Z" fill="#0f2f58" fill-opacity="0.30"/>
<path d="M386.5,79.8 L439.6,79.8 L514.2,102.0 L448.7,102.0Z" fill="#0f2f58" fill-opacity="0.30"/>
<path d="M492.7,79.8 L545.8,79.8 L645.3,102.0 L579.7,102.0Z" fill="#0f2f58" fill-opacity="0.30"/>
<path d="M599.0,79.8 L652.1,79.8 L776.4,102.0 L710.8,102.0Z" fill="#0f2f58" fill-opacity="0.30"/>
<path d="M705.2,79.8 L758.3,79.8 L907.4,102.0 L841.9,102.0Z" fill="#0f2f58" fill-opacity="0.30"/>
<path d="M-665.4,102.0 L-599.9,102.0 L-820.2,137.8 L-905.7,137.8Z" fill="#0f2f58" fill-opacity="0.30"/>
<path d="M-534.4,102.0 L-468.8,102.0 L-649.1,137.8 L-734.6,137.8Z" fill="#0f2f58" fill-opacity="0.30"/>
<path d="M-403.3,102.0 L-337.7,102.0 L-477.9,137.8 L-563.5,137.8Z" fill="#0f2f58" fill-opacity="0.30"/>
<path d="M-272.2,102.0 L-206.7,102.0 L-306.8,137.8 L-392.4,137.8Z" fill="#0f2f58" fill-opacity="0.30"/>
<path d="M-141.1,102.0 L-75.6,102.0 L-135.7,137.8 L-221.2,137.8Z" fill="#0f2f58" fill-opacity="0.30"/>
<path d="M-10.1,102.0 L55.5,102.0 L35.4,137.8 L-50.1,137.8Z" fill="#0f2f58" fill-opacity="0.30"/>
<path d="M121.0,102.0 L186.5,102.0 L206.6,137.8 L121.0,137.8Z" fill="#0f2f58" fill-opacity="0.30"/>
<path d="M252.1,102.0 L317.6,102.0 L377.7,137.8 L292.1,137.8Z" fill="#0f2f58" fill-opacity="0.30"/>
<path d="M383.1,102.0 L448.7,102.0 L548.8,137.8 L463.2,137.8Z" fill="#0f2f58" fill-opacity="0.30"/>
<path d="M514.2,102.0 L579.7,102.0 L719.9,137.8 L634.4,137.8Z" fill="#0f2f58" fill-opacity="0.30"/>
<path d="M645.3,102.0 L710.8,102.0 L891.1,137.8 L805.5,137.8Z" fill="#0f2f58" fill-opacity="0.30"/>
<path d="M776.4,102.0 L841.9,102.0 L1062.2,137.8 L976.6,137.8Z" fill="#0f2f58" fill-opacity="0.30"/>
<path d="M-820.2,137.8 L-734.6,137.8 L-1111.1,205.0 L-1234.3,205.0Z" fill="#0f2f58" fill-opacity="0.30"/>
<path d="M-649.1,137.8 L-563.5,137.8 L-864.7,205.0 L-987.9,205.0Z" fill="#0f2f58" fill-opacity="0.30"/>
<path d="M-477.9,137.8 L-392.4,137.8 L-618.3,205.0 L-741.5,205.0Z" fill="#0f2f58" fill-opacity="0.30"/>
<path d="M-306.8,137.8 L-221.2,137.8 L-371.8,205.0 L-495.1,205.0Z" fill="#0f2f58" fill-opacity="0.30"/>
<path d="M-135.7,137.8 L-50.1,137.8 L-125.4,205.0 L-248.6,205.0Z" fill="#0f2f58" fill-opacity="0.30"/>
<path d="M35.4,137.8 L121.0,137.8 L121.0,205.0 L-2.2,205.0Z" fill="#0f2f58" fill-opacity="0.30"/>
<path d="M206.6,137.8 L292.1,137.8 L367.4,205.0 L244.2,205.0Z" fill="#0f2f58" fill-opacity="0.30"/>
<path d="M377.7,137.8 L463.2,137.8 L613.8,205.0 L490.6,205.0Z" fill="#0f2f58" fill-opacity="0.30"/>
<path d="M548.8,137.8 L634.4,137.8 L860.3,205.0 L737.1,205.0Z" fill="#0f2f58" fill-opacity="0.30"/>
<path d="M719.9,137.8 L805.5,137.8 L1106.7,205.0 L983.5,205.0Z" fill="#0f2f58" fill-opacity="0.30"/>
<path d="M891.1,137.8 L976.6,137.8 L1353.1,205.0 L1229.9,205.0Z" fill="#0f2f58" fill-opacity="0.30"/>
<path d="M1062.2,137.8 L1147.7,137.8 L1599.5,205.0 L1476.3,205.0Z" fill="#0f2f58" fill-opacity="0.30"/>
<path d="M-1357.5,205.0 L-1234.3,205.0 L-2299.4,377.9 L-2519.5,377.9Z" fill="#0f2f58" fill-opacity="0.30"/>
<path d="M-1111.1,205.0 L-987.9,205.0 L-1859.4,377.9 L-2079.4,377.9Z" fill="#0f2f58" fill-opacity="0.30"/>
<path d="M-864.7,205.0 L-741.5,205.0 L-1419.3,377.9 L-1639.3,377.9Z" fill="#0f2f58" fill-opacity="0.30"/>
<path d="M-618.3,205.0 L-495.1,205.0 L-979.2,377.9 L-1199.2,377.9Z" fill="#0f2f58" fill-opacity="0.30"/>
<path d="M-371.8,205.0 L-248.6,205.0 L-539.1,377.9 L-759.2,377.9Z" fill="#0f2f58" fill-opacity="0.30"/>
<path d="M-125.4,205.0 L-2.2,205.0 L-99.0,377.9 L-319.1,377.9Z" fill="#0f2f58" fill-opacity="0.30"/>
<path d="M121.0,205.0 L244.2,205.0 L341.0,377.9 L121.0,377.9Z" fill="#0f2f58" fill-opacity="0.30"/>
<path d="M367.4,205.0 L490.6,205.0 L781.1,377.9 L561.1,377.9Z" fill="#0f2f58" fill-opacity="0.30"/>
<path d="M613.8,205.0 L737.1,205.0 L1221.2,377.9 L1001.2,377.9Z" fill="#0f2f58" fill-opacity="0.30"/>
<path d="M860.3,205.0 L983.5,205.0 L1661.3,377.9 L1441.2,377.9Z" fill="#0f2f58" fill-opacity="0.30"/>
<path d="M1106.7,205.0 L1229.9,205.0 L2101.4,377.9 L1881.3,377.9Z" fill="#0f2f58" fill-opacity="0.30"/>
<path d="M1353.1,205.0 L1476.3,205.0 L2541.4,377.9 L2321.4,377.9Z" fill="#0f2f58" fill-opacity="0.30"/>
<rect x="0" y="0" width="242" height="38" fill="url(#fsky)"/>
<rect x="0" y="38" width="242" height="6" fill="#1d3b63" opacity="0.55"/>
<path d="M92 136 Q94 130 104 131 L110 134 L108 142 Q96 143 92 136Z" fill="#1f436f" opacity="0.9"/>
<path d="M133 153 Q150 152 154 162 Q153 172 136 172 Z" fill="#2a507f" opacity="0.9"/>
<path d="M133 178 Q156 176 160 192 Q158 207 136 206 Z" fill="#2a507f" opacity="0.85"/>
<path d="M93 206 Q96 200 116 201 Q138 202 139 212 Q136 225 114 225 Q94 222 93 206Z" fill="#2a507f" opacity="0.9"/>
<rect x="90" y="0" width="62" height="30" rx="9" fill="#3b3b3f"/>
<rect x="90" y="4" width="3" height="22" rx="1.5" fill="#aab4c0"/><rect x="149" y="6" width="3" height="20" rx="1.5" fill="#8d97a3"/>
<path d="M102 0 L139 0 L138 56 Q140 63 147 70 L151 80 L153 118 L146 122 L140 112 Q133 94 126 86 L131 112 L108 114 Q105 100 100 92 Q92 86 92 74 Q93 62 104 61 L104 40 Z" fill="#f2f3f5"/>
<path d="M104 60 Q112 66 122 72 Q134 80 140 92 L144 104 Q138 86 124 78 Q110 70 104 66Z" fill="#d9dce1"/>
<path d="M121 87 Q133 89 140 107 L141 113 L131 113 Q128 97 121 87Z" fill="#3f6fa6"/>
<path d="M148 68 L153 79 L156 118 L158 138 L150 141 L152 120 L150 82Z" fill="#45484f"/>
<path d="M134 110 L150 112 L152 138 L138 141 Z" fill="#e9ebee"/>
<ellipse cx="120.5" cy="118" rx="11.5" ry="7" fill="#55585e"/><ellipse cx="120.5" cy="117" rx="6" ry="3" fill="#7b7f86"/>
<path d="M107 121 Q120 129 134 121 L134 172 L107 172Z" fill="#f1f2f4"/>
<path d="M94 160 Q94 152 107 152 L109 170 L96 170 Q94 167 94 160Z" fill="#f5f6f7"/>
<rect x="98" y="164" width="9" height="4" rx="1" fill="#2b2b2d"/><circle cx="103" cy="157" r="1.2" fill="#555"/>
<path d="M108 171 L133 171 L134 182 L141 190 L140 198 L134 196 L127 191 L114 191 L106 197 L100 198 L100 186 L107 180Z" fill="#1c1e22"/>
<rect x="114" y="192" width="13" height="19" fill="#9e3fae"/>
<rect x="116" y="194" width="9" height="14" fill="#cf62d6"/>
</g></svg>
<svg style="position:absolute;left:519px;top:136px" width="242" height="242" viewBox="0 0 242 242">
<defs><filter id="wblur" x="-5%" y="-5%" width="110%" height="110%"><feGaussianBlur stdDeviation="0.9"/></filter><linearGradient id="wsky" x1="0" y1="0" x2="1" y2="1"><stop offset="0" stop-color="#4076ad"/><stop offset="1" stop-color="#31649a"/></linearGradient><linearGradient id="wcube" x1="0" y1="0" x2="0" y2="1"><stop offset="0" stop-color="#b67ac2"/><stop offset="1" stop-color="#a864b0"/></linearGradient></defs>
<rect x="0" y="0" width="242" height="242" fill="url(#wsky)"/>
<g filter="url(#wblur)">
<rect x="151" y="0" width="91" height="242" fill="#76a8dc"/>
<rect x="151" y="40" width="91" height="202" fill="#5f8fc4"/>
<path d="M55 242 L55 120 Q58 22 151 17 L151 242 Z" fill="#213d5d"/>
<path d="M151 17 Q228 20 242 80 L242 242 L151 242 Z" fill="#4e6c90"/>
<path d="M175 60 L210 70 Q218 100 214 140 L214 165 L175 165 Z" fill="#3e5b7d"/>
<rect x="0" y="150" width="60" height="92" fill="#32587f" opacity="0.8"/>
<rect x="10" y="168" width="20" height="30" fill="#263f60"/>
<rect x="36" y="174" width="5" height="9" fill="#8fa8c0"/><rect x="50" y="174" width="5" height="9" fill="#8fa8c0"/>
<rect x="0" y="190" width="12" height="30" fill="#c8dcef" opacity="0.7"/>
<path d="M0 228 Q30 212 60 222 Q90 205 120 195 L242 195 L242 242 L0 242 Z" fill="#151a20"/>
<rect x="106" y="159" width="111" height="83" fill="url(#wcube)"/>
<path d="M106 159 L205 159 L217 171 L217 177 L106 177 Z" fill="#6a2d62"/>
<path d="M106 210 Q140 212 180 242 L106 242 Z" fill="#de8ae0"/>
<path d="M200 196 L214 206 L214 214 Z" fill="#e59be8"/>
<path d="M180 242 Q210 236 242 232 L242 242 Z" fill="#151a20"/>
</g></svg>
</div>
</body></html>
